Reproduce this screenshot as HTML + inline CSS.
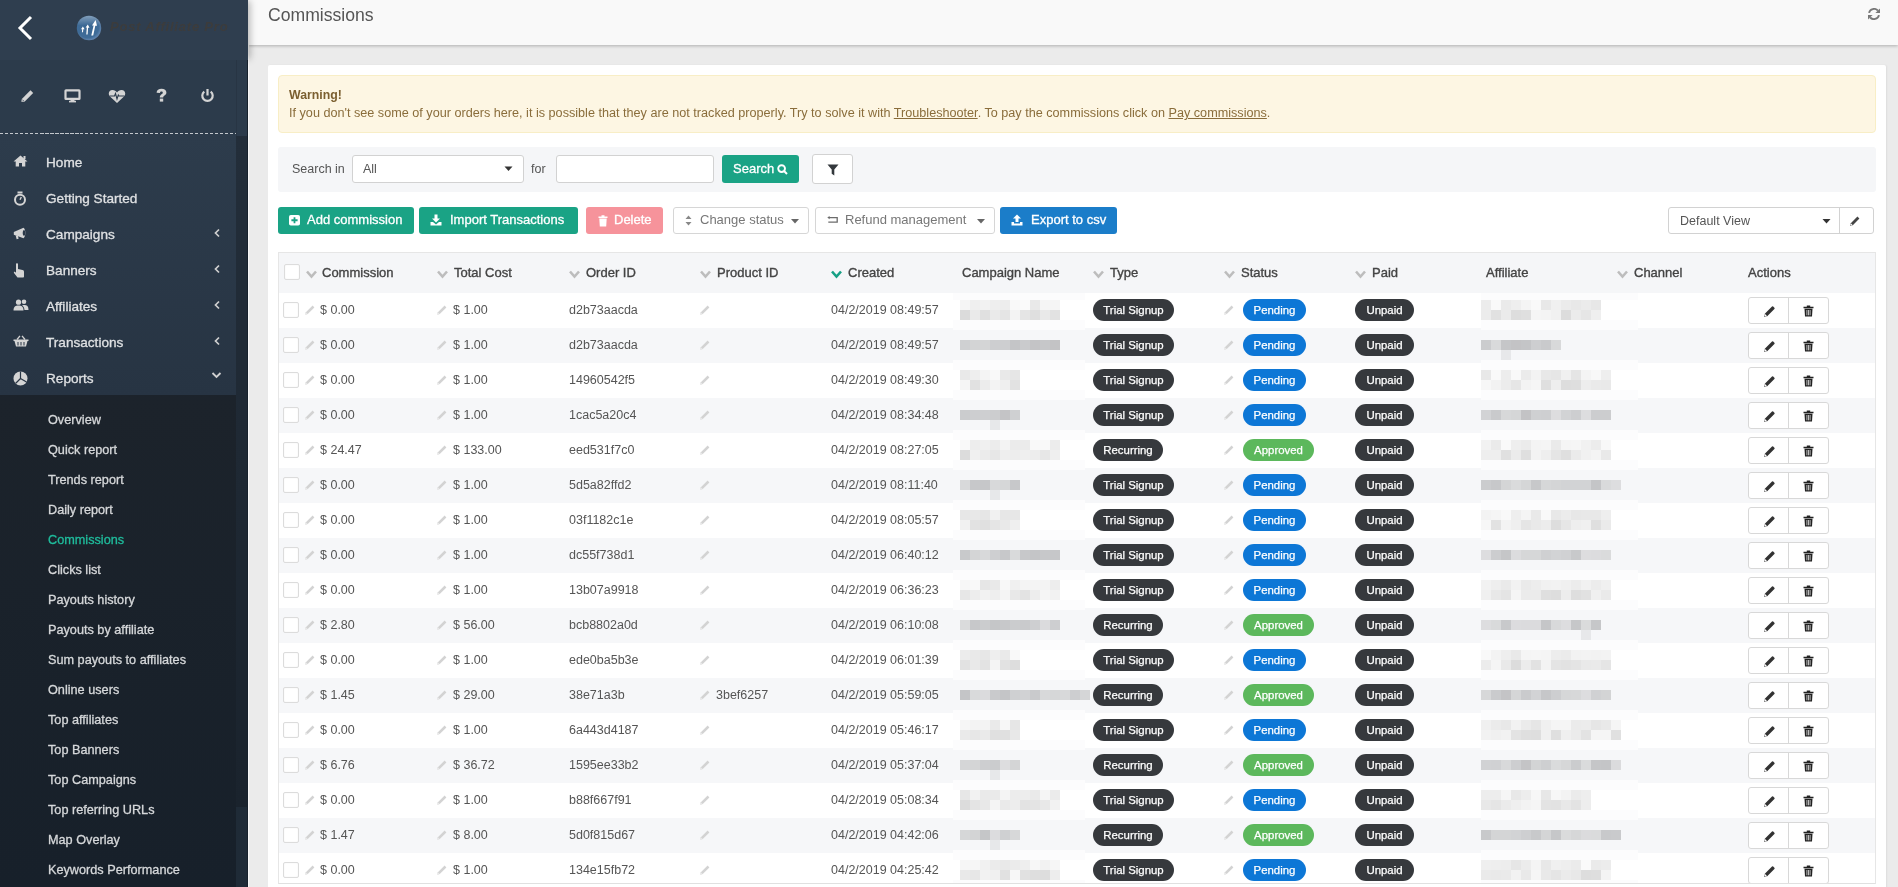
<!DOCTYPE html><html><head><meta charset="utf-8"><style>
*{margin:0;padding:0;box-sizing:border-box}
svg{display:block}
#wrap{position:absolute;left:0;top:0;width:1898px;height:887px;will-change:transform}
html,body{width:1898px;height:887px;overflow:hidden;background:#ebebeb;font-family:"Liberation Sans",sans-serif}
.a{position:absolute}
#sb{position:absolute;left:0;top:0;width:248px;height:887px;background:#1b222b;z-index:5}
#edge{position:absolute;left:247px;top:60px;width:1px;height:827px;background:#17212c}
#edge2{position:absolute;left:248px;top:45px;width:1px;height:842px;background:#f7f7f7}
#sbh{position:absolute;left:0;top:0;width:248px;height:60px;background:#2f3e4f;box-shadow:3px 0 7px -1px rgba(0,0,0,.28)}
#sbi{position:absolute;left:0;top:60px;width:236px;height:74px;background:#2c3b4b}
#sbm{position:absolute;left:0;top:134px;width:236px;height:261px;background:linear-gradient(#2d3c4c,#273443)}
#sbsub{position:absolute;left:0;top:395px;width:236px;height:492px;background:linear-gradient(#1c232b,#17202a)}
#track{position:absolute;left:236px;top:60px;width:12px;height:76px;background:#2c3b4b;border-left:1px solid #283544}
#track2{position:absolute;left:236px;top:136px;width:12px;height:671px;background:linear-gradient(#232e3a,#1a232d)}
#track3{display:none}
#thumb{position:absolute;left:236px;top:807px;width:12px;height:80px;background:#1f2b37}
.dash{position:absolute;left:0;top:133px;width:236px;height:1px;background:repeating-linear-gradient(90deg,#c3c8cd 0 3.5px,transparent 3.5px 5px)}
.mi{position:absolute;left:46px;color:#dfe1e3;font-size:13.6px;line-height:18px;white-space:nowrap;-webkit-text-stroke:.3px #dfe1e3}
.mic{position:absolute;left:13px}
.chev{position:absolute;left:212.5px}
.si{position:absolute;left:48px;color:#d6d8da;font-size:12.7px;line-height:16px;white-space:nowrap;-webkit-text-stroke:.3px currentColor}
#hdr{position:absolute;left:248px;top:0;width:1650px;height:45px;background:#f9f9f9;box-shadow:0 1px 3px rgba(0,0,0,.25)}
#title{position:absolute;left:20px;top:4px;font-size:17.6px;line-height:22px;color:#555}
#panel{position:absolute;left:268px;top:65px;width:1618px;height:830px;background:#fff;border-radius:2px;box-shadow:1px 0 2px rgba(0,0,0,.06)}
#warn{position:absolute;left:278px;top:75px;width:1598px;height:58px;background:#fdf6e3;border:1px solid #f8eec6;border-radius:4px;color:#8a6d3b}
#warn b{position:absolute;left:10px;top:12px;font-size:12.3px;line-height:15px;color:#7b5f30}
#warn .t{position:absolute;left:10px;top:30px;font-size:12.65px;line-height:15px;white-space:nowrap;color:#8a6d3b}
#warn u{text-decoration:underline}
#sbar{position:absolute;left:278px;top:147px;width:1598px;height:45px;background:#f5f6f8;border-radius:3px}
.lbl{position:absolute;font-size:12.5px;line-height:16px;color:#555}
.inp{position:absolute;background:#fff;border:1px solid #d2d2d2;border-radius:3px}
.btn{position:absolute;height:28px;border-radius:3px;color:#fff;font-size:13px;line-height:28px;white-space:nowrap;-webkit-text-stroke:.3px #fff}
.btn.w{-webkit-text-stroke:0}
.g{background:#1aa385}
.w{background:#fff;border:1px solid #d6d6d6;color:#777}
#tbl{position:absolute;left:278px;top:252px;width:1598px;height:632px;border:1px solid #e6e6e6;border-bottom:1px solid #e0e0e0;overflow:hidden}
#th{position:absolute;left:0;top:0;width:1596px;height:40px;background:#f5f6f8}
.hd{position:absolute;top:12px;font-size:13px;line-height:16px;color:#444;-webkit-text-stroke:.35px #444;white-space:nowrap}
.row{position:absolute;left:0;width:1596px;height:35px}
.row.odd{background:#f6f7f9}
.cb{position:absolute;width:16px;height:16px;border:1px solid #dcdcdc;border-radius:2px;background:#fff;box-shadow:inset 0 0 2px rgba(0,0,0,.05)}
.tx{position:absolute;top:9px;font-size:12.5px;line-height:16px;color:#555;white-space:nowrap}
.pen{position:absolute}
.badge{position:absolute;top:6px;height:22px;border-radius:11px;color:#fff;font-size:11.4px;line-height:22px;-webkit-text-stroke:.25px #fff;text-align:center;white-space:nowrap}
.dk{background:#36393d}
.bl{background:#0d77d6}
.gr{background:#5cb85c}
.blur{position:absolute}
.act{position:absolute;top:4px;width:81px;height:27px;border:1px solid #d8d8d8;border-radius:3px;background:#fff}
.act:after{content:"";position:absolute;left:39px;top:0;width:1px;height:25px;background:#d8d8d8}
</style></head><body><div id="wrap">
<div id="sb"><div id="sbh"></div><div id="sbi"></div><div id="sbm"></div><div id="sbsub"></div><div id="track"></div><div id="track2"></div><div id="track3"></div><div id="thumb"></div><div id="edge"></div><div class="dash"></div>
<svg class="a" style="left:16px;top:14px" width="20" height="30" viewBox="0 0 20 30"><path d="M15 3 L4 14 L15 25" stroke="#fff" stroke-width="3" fill="none"/></svg>
<svg class="a" style="left:76px;top:15px" width="26" height="26" viewBox="0 0 26 26"><defs><radialGradient id="lg" cx="45%" cy="45%" r="60%"><stop offset="0" stop-color="#3a6793"/><stop offset=".75" stop-color="#3f6c98"/><stop offset="1" stop-color="#6f8fb8"/></radialGradient><linearGradient id="lg2" x1="0" y1="0" x2="0" y2="1"><stop offset="0" stop-color="#fff" stop-opacity=".35"/><stop offset=".4" stop-color="#fff" stop-opacity="0"/></linearGradient></defs><circle cx="13" cy="13" r="12.2" fill="url(#lg)"/><circle cx="13" cy="13" r="12.2" fill="url(#lg2)"/><path d="M6.9 11.6 L5 14.2 H6.2 L5.9 17.3 H7 L7.3 14.3 H8.6 Z M11.8 9.4 L9.6 12.6 H10.8 L10.3 19.5 H11.6 L12.1 12.8 H13.5 Z M19.6 5 L16 10.4 H17.6 L15.3 20.6 H17.2 L19.3 10.7 H21 Z" fill="#fff"/></svg>
<div class="a" style="left:110px;top:18px;font-size:13px;line-height:18px;font-weight:bold;font-style:italic;color:#3c3c3c;letter-spacing:.8px;white-space:nowrap">Post Affiliate Pro</div>
<svg class="a" style="left:20px;top:88px" width="15" height="15" viewBox="0 0 15 15"><path d="M1.3 13.8 L1.8 11 L10.5 2.3 L13.2 5 L4.5 13.7 Z" fill="#d4d4d4"/><path d="M2.3 11.6 L3.9 13.2" stroke="#2c3b4b" stroke-width=".8"/></svg>
<svg class="a" style="left:64px;top:89px" width="17" height="14" viewBox="0 0 17 14"><rect x="1.5" y="1.3" width="14" height="8.6" rx=".5" fill="none" stroke="#d4d4d4" stroke-width="2.2"/><rect x="6.5" y="10.5" width="4" height="1.8" fill="#d4d4d4"/><rect x="5" y="11.8" width="7" height="1.6" fill="#d4d4d4"/></svg>
<svg class="a" style="left:108px;top:88.5px" width="18" height="15" viewBox="0 0 18 15"><path d="M9 14 L2 7.5 C-0.5 5 1 1 4.5 1 C6.5 1 8 2.2 9 3.5 C10 2.2 11.5 1 13.5 1 C17 1 18.5 5 16 7.5 Z" fill="#d4d4d4"/><path d="M1.5 7 H6.5 L7.5 4.5 L9 10 L10.3 6 L11 7 H16.5" stroke="#2c3b4b" stroke-width="1.1" fill="none"/></svg>
<svg class="a" style="left:155px;top:88px" width="13" height="15" viewBox="0 0 13 15"><path d="M1.6 4.8 C1.6 2.1 3.8 0.8 6.5 0.8 C9.4 0.8 11.4 2.4 11.4 4.6 C11.4 7.3 8.2 7.5 8.2 9.6 H4.8 C4.8 6.4 7.8 6.3 7.8 4.8 C7.8 4 7.3 3.6 6.5 3.6 C5.6 3.6 5 4.1 5 5 Z" fill="#d4d4d4"/><rect x="4.8" y="10.6" width="3.4" height="3" fill="#d4d4d4"/></svg>
<svg class="a" style="left:200px;top:88px" width="15" height="15" viewBox="0 0 15 15"><path d="M4.3 3.6 A5.2 5.2 0 1 0 10.7 3.6" stroke="#d4d4d4" stroke-width="2.2" fill="none"/><rect x="6.4" y="1" width="2.2" height="6.5" fill="#d4d4d4"/></svg>
<div class="mi" style="top:154px">Home</div>
<div class="mic" style="top:155px"><svg width="15" height="12" viewBox="0 0 15 12"><path d="M7.5 0.5 L14.5 6.5 H12.3 V11.5 H9 V8 H6 V11.5 H2.7 V6.5 H0.5 Z" fill="#d4d4d4"/><rect x="10.5" y="1" width="2" height="3" fill="#d4d4d4"/></svg></div>
<div class="mi" style="top:190px">Getting Started</div>
<div class="mic" style="top:191px"><svg width="14" height="15" viewBox="0 0 14 15"><circle cx="7" cy="8.8" r="5" stroke="#d4d4d4" stroke-width="2" fill="none"/><rect x="4.5" y="0.5" width="5" height="2" fill="#d4d4d4"/><path d="M7 8.8 L8.3 6" stroke="#d4d4d4" stroke-width="1.4"/></svg></div>
<div class="mi" style="top:226px">Campaigns</div>
<div class="mic" style="top:227px"><svg width="15" height="13" viewBox="0 0 15 13"><path d="M0.8 5 L10.5 0.8 C12.8 2.5 13 9.5 10.5 11.2 L0.8 7.8 Z" fill="#d4d4d4"/><ellipse cx="11" cy="6" rx="1.3" ry="3" fill="#2a3848"/><path d="M2.6 8.2 L5 9 L5.6 11.8 L3.6 12.2 Z" fill="#d4d4d4"/></svg></div>
<div class="mi" style="top:262px">Banners</div>
<div class="mic" style="top:263px"><svg width="12" height="15" viewBox="0 0 12 15"><path d="M3 1 C3 0 5 0 5 1 V6 L9.5 7 C11 7.3 11 8.5 11 9 V13.5 C11 14.3 10.5 14.5 10 14.5 H4.5 L1 10 C0.5 9 1.5 8.5 2.2 9 L3 9.8 Z" fill="#d4d4d4"/></svg></div>
<div class="mi" style="top:298px">Affiliates</div>
<div class="mic" style="top:299px"><svg width="16" height="12" viewBox="0 0 16 12"><circle cx="5.5" cy="3.2" r="2.6" fill="#d4d4d4"/><path d="M0.5 11.5 C0.5 7.5 2.5 6.5 5.5 6.5 C8.5 6.5 10.5 7.5 10.5 11.5 Z" fill="#d4d4d4"/><circle cx="11" cy="2.8" r="2.3" fill="#d4d4d4"/><path d="M11.5 11 H15.5 C15.5 7 14 6 11 6 C10 6 9.5 6.2 9.2 6.4 C10.5 7.3 11.3 8.8 11.5 11 Z" fill="#d4d4d4"/></svg></div>
<div class="mi" style="top:334px">Transactions</div>
<div class="mic" style="top:335px"><svg width="16" height="12" viewBox="0 0 16 12"><path d="M0.5 4.5 H15.5 V6 H0.5 Z M1.5 6 H14.5 L13 11.5 H3 Z" fill="#d4d4d4"/><path d="M4 4.5 L7 0.8 M12 4.5 L9 0.8" stroke="#d4d4d4" stroke-width="1.3"/><path d="M5 7 V10.5 M8 7 V10.5 M11 7 V10.5" stroke="#283544" stroke-width="1"/></svg></div>
<div class="mi" style="top:370px">Reports</div>
<div class="mic" style="top:371px"><svg width="15" height="15" viewBox="0 0 15 15"><circle cx="7.5" cy="7.5" r="7" fill="#d4d4d4"/><path d="M7.5 7.5 L7.5 0.5 M7.5 7.5 L13.5 11 M7.5 7.5 L2.5 12.5" stroke="#283544" stroke-width="1.2"/></svg></div>
<svg class="chev" style="top:228px" width="8" height="10" viewBox="0 0 8 10"><path d="M6 1.5 L2.5 5 L6 8.5" stroke="#d0d0d0" stroke-width="1.7" fill="none"/></svg>
<svg class="chev" style="top:264px" width="8" height="10" viewBox="0 0 8 10"><path d="M6 1.5 L2.5 5 L6 8.5" stroke="#d0d0d0" stroke-width="1.7" fill="none"/></svg>
<svg class="chev" style="top:300px" width="8" height="10" viewBox="0 0 8 10"><path d="M6 1.5 L2.5 5 L6 8.5" stroke="#d0d0d0" stroke-width="1.7" fill="none"/></svg>
<svg class="chev" style="top:336px" width="8" height="10" viewBox="0 0 8 10"><path d="M6 1.5 L2.5 5 L6 8.5" stroke="#d0d0d0" stroke-width="1.7" fill="none"/></svg>
<svg class="chev" style="top:371px;left:211px" width="11" height="8" viewBox="0 0 11 8"><path d="M1.5 2 L5.5 6 L9.5 2" stroke="#d0d0d0" stroke-width="1.8" fill="none"/></svg>
<div class="si" style="top:412px">Overview</div>
<div class="si" style="top:442px">Quick report</div>
<div class="si" style="top:472px">Trends report</div>
<div class="si" style="top:502px">Daily report</div>
<div class="si" style="top:532px;color:#1fbc9c">Commissions</div>
<div class="si" style="top:562px">Clicks list</div>
<div class="si" style="top:592px">Payouts history</div>
<div class="si" style="top:622px">Payouts by affiliate</div>
<div class="si" style="top:652px">Sum payouts to affiliates</div>
<div class="si" style="top:682px">Online users</div>
<div class="si" style="top:712px">Top affiliates</div>
<div class="si" style="top:742px">Top Banners</div>
<div class="si" style="top:772px">Top Campaigns</div>
<div class="si" style="top:802px">Top referring URLs</div>
<div class="si" style="top:832px">Map Overlay</div>
<div class="si" style="top:862px">Keywords Performance</div>
</div>
<div id="hdr"><div id="title">Commissions</div>
<svg class="a" style="left:1620px;top:8px" width="12" height="12" viewBox="0 0 12 12"><path d="M1.04 4.9 A5.1 5.1 0 0 1 9.9 2.7" stroke="#787878" stroke-width="1.9" fill="none"/><path d="M7.4 4.9 H12 V0.4 Z" fill="#787878"/><path d="M10.96 7.1 A5.1 5.1 0 0 1 2.1 9.3" stroke="#787878" stroke-width="1.9" fill="none"/><path d="M4.6 7.1 H0 V11.6 Z" fill="#787878"/></svg>
</div>
<div id="panel"></div><div id="edge2"></div>
<div id="warn"><b>Warning!</b><div class="t">If you don't see some of your orders here, it is possible that they are not tracked properly. Try to solve it with <u>Troubleshooter</u>. To pay the commissions click on <u>Pay commissions</u>.</div></div>
<div id="sbar"></div>
<div class="lbl" style="left:292px;top:161px">Search in</div>
<div class="inp" style="left:352px;top:155px;width:172px;height:28px"><div class="lbl" style="left:10px;top:5px;color:#555">All</div><svg class="a" style="left:151px;top:10px" width="9" height="6" viewBox="0 0 9 6"><path d="M0.5 0.5 H8.5 L4.5 5 Z" fill="#333"/></svg></div>
<div class="lbl" style="left:531px;top:161px">for</div>
<div class="inp" style="left:556px;top:155px;width:158px;height:28px"></div>
<div class="btn g" style="left:722px;top:155px;width:77px;height:28px;padding-left:11px">Search <svg style="position:absolute;left:55px;top:9px" width="11" height="11" viewBox="0 0 11 11"><circle cx="4.6" cy="4.6" r="3.4" stroke="#fff" stroke-width="1.9" fill="none"/><path d="M7 7 L10 10" stroke="#fff" stroke-width="2"/></svg></div>
<div class="inp" style="left:812px;top:154px;width:41px;height:30px"><svg class="a" style="left:14px;top:9px" width="12" height="12" viewBox="0 0 12 12"><path d="M0.5 0.5 H11.5 L7.3 5.5 V11.5 L4.7 9.8 V5.5 Z" fill="#33383c"/></svg></div>
<div class="btn g" style="left:278px;top:207px;height:27px;line-height:26px;width:136px;padding-left:29px">Add commission<svg style="position:absolute;left:11px;top:8px" width="11" height="11" viewBox="0 0 11 11"><rect x="0" y="0" width="11" height="10.5" rx="1.8" fill="#fff"/><path d="M5.5 2.2 V8.3 M2.4 5.25 H8.6" stroke="#1aa385" stroke-width="1.8"/></svg></div>
<div class="btn g" style="left:419px;top:207px;height:27px;line-height:26px;width:159px;padding-left:31px">Import Transactions<svg style="position:absolute;left:11px;top:7px" width="12" height="12" viewBox="0 0 12 12"><path d="M4.5 0.5 H7.5 V4.5 H10 L6 8.5 L2 4.5 H4.5 Z" fill="#fff"/><path d="M0.5 8 H3 L6 10.5 L9 8 H11.5 V11.5 H0.5 Z" fill="#fff"/></svg></div>
<div class="btn" style="left:586px;top:207px;height:27px;line-height:26px;width:77px;background:#f6939b;padding-left:28px">Delete<svg style="position:absolute;left:12px;top:8px" width="10" height="12" viewBox="0 0 10 12"><path d="M0.5 1.5 H9.5 V3 H0.5 Z M3.5 0.3 H6.5 V1.5 H3.5 Z M1.3 3.5 H8.7 L8.2 11.5 H1.8 Z" fill="#fff"/></svg></div>
<div class="btn w" style="left:673px;top:207px;height:27px;width:136px;padding-left:26px;line-height:24px">Change status<svg style="position:absolute;left:11px;top:7px" width="7" height="11" viewBox="0 0 7 11"><path d="M3.5 0.5 L6.5 4 H0.5 Z M3.5 10.5 L6.5 7 H0.5 Z" fill="#888"/></svg><svg style="position:absolute;left:117px;top:11px" width="8" height="5" viewBox="0 0 8 5"><path d="M0 0 H8 L4 4.5 Z" fill="#666"/></svg></div>
<div class="btn w" style="left:815px;top:207px;height:27px;width:180px;padding-left:29px;line-height:24px">Refund management<svg style="position:absolute;left:11px;top:8px" width="12" height="8" viewBox="0 0 12 8"><path d="M2 1.6 H10.2 V6.1 H1.3" stroke="#6c6c6c" stroke-width="1.3" fill="none"/><path d="M0.3 1.6 L2.6 0 V3.2 Z" fill="#6c6c6c"/></svg><svg style="position:absolute;left:161px;top:11px" width="8" height="5" viewBox="0 0 8 5"><path d="M0 0 H8 L4 4.5 Z" fill="#666"/></svg></div>
<div class="btn" style="left:1000px;top:207px;height:27px;line-height:26px;width:117px;background:#1b7dc9;padding-left:31px">Export to csv<svg style="position:absolute;left:11px;top:7px" width="12" height="12" viewBox="0 0 12 12"><path d="M6 0.5 L10 4.5 H7.5 V8 H4.5 V4.5 H2 Z" fill="#fff"/><path d="M0.5 8 H3 V9.5 H9 V8 H11.5 V11.5 H0.5 Z" fill="#fff"/></svg></div>
<div class="inp" style="left:1668px;top:207px;width:206px;height:27px;border-color:#d2d2d2"><div class="lbl" style="left:11px;top:4.5px;color:#555">Default View</div><svg class="a" style="left:153px;top:11px" width="9" height="5" viewBox="0 0 9 5"><path d="M0.5 0 H8.5 L4.5 4.5 Z" fill="#333"/></svg><div class="a" style="left:170px;top:0;width:1px;height:25px;background:#d2d2d2"></div><svg class="a" style="left:181px;top:7.5px" width="10" height="10" viewBox="0 0 10 10"><path d="M0.3 9.7 L0.8 7.2 L7.4 0.6 L9.4 2.6 L2.8 9.2 Z" fill="#444"/><path d="M0.3 9.7 L0.8 7.2 L2.8 9.2 Z" fill="#fff"/><path d="M0.3 9.7 L0.5 8.7 L1.3 9.5 Z" fill="#444"/></svg></div>
<div id="tbl"><div id="th">
<div class="cb" style="left:5px;top:11px"></div>
<svg class="a" style="left:27px;top:17px" width="11" height="9" viewBox="0 0 11 9"><path d="M1 1.5 L5.5 6.5 L10 1.5" stroke="#bdbdbd" stroke-width="2.6" fill="none"/></svg>
<div class="hd" style="left:43px">Commission</div>
<svg class="a" style="left:158px;top:17px" width="11" height="9" viewBox="0 0 11 9"><path d="M1 1.5 L5.5 6.5 L10 1.5" stroke="#bdbdbd" stroke-width="2.6" fill="none"/></svg>
<div class="hd" style="left:175px">Total Cost</div>
<svg class="a" style="left:290px;top:17px" width="11" height="9" viewBox="0 0 11 9"><path d="M1 1.5 L5.5 6.5 L10 1.5" stroke="#bdbdbd" stroke-width="2.6" fill="none"/></svg>
<div class="hd" style="left:307px">Order ID</div>
<svg class="a" style="left:421px;top:17px" width="11" height="9" viewBox="0 0 11 9"><path d="M1 1.5 L5.5 6.5 L10 1.5" stroke="#bdbdbd" stroke-width="2.6" fill="none"/></svg>
<div class="hd" style="left:438px">Product ID</div>
<svg class="a" style="left:552px;top:17px" width="11" height="9" viewBox="0 0 11 9"><path d="M1 1.5 L5.5 6.5 L10 1.5" stroke="#16a085" stroke-width="2.6" fill="none"/></svg>
<div class="hd" style="left:569px">Created</div>
<div class="hd" style="left:683px">Campaign Name</div>
<svg class="a" style="left:814px;top:17px" width="11" height="9" viewBox="0 0 11 9"><path d="M1 1.5 L5.5 6.5 L10 1.5" stroke="#bdbdbd" stroke-width="2.6" fill="none"/></svg>
<div class="hd" style="left:831px">Type</div>
<svg class="a" style="left:945px;top:17px" width="11" height="9" viewBox="0 0 11 9"><path d="M1 1.5 L5.5 6.5 L10 1.5" stroke="#bdbdbd" stroke-width="2.6" fill="none"/></svg>
<div class="hd" style="left:962px">Status</div>
<svg class="a" style="left:1076px;top:17px" width="11" height="9" viewBox="0 0 11 9"><path d="M1 1.5 L5.5 6.5 L10 1.5" stroke="#bdbdbd" stroke-width="2.6" fill="none"/></svg>
<div class="hd" style="left:1093px">Paid</div>
<div class="hd" style="left:1207px">Affiliate</div>
<svg class="a" style="left:1338px;top:17px" width="11" height="9" viewBox="0 0 11 9"><path d="M1 1.5 L5.5 6.5 L10 1.5" stroke="#bdbdbd" stroke-width="2.6" fill="none"/></svg>
<div class="hd" style="left:1355px">Channel</div>
<div class="hd" style="left:1469px">Actions</div>
</div>
<div class="row" style="top:40px">
<div class="cb" style="left:4px;top:9px"></div>
<div class="pen" style="left:26px;top:12px"><svg width="10" height="10" viewBox="0 0 10 10"><path d="M0.3 9.7 L0.9 7.3 L7.6 0.6 L9.4 2.4 L2.7 9.1 Z" fill="#d3d3d3"/><path d="M0.3 9.7 L0.9 7.3 L2.7 9.1 Z" fill="#e9e9e9"/></svg></div>
<div class="tx" style="left:41px">$ 0.00</div>
<div class="pen" style="left:158px;top:12px"><svg width="10" height="10" viewBox="0 0 10 10"><path d="M0.3 9.7 L0.9 7.3 L7.6 0.6 L9.4 2.4 L2.7 9.1 Z" fill="#d3d3d3"/><path d="M0.3 9.7 L0.9 7.3 L2.7 9.1 Z" fill="#e9e9e9"/></svg></div>
<div class="tx" style="left:174px">$ 1.00</div>
<div class="tx" style="left:290px">d2b73aacda</div>
<div class="pen" style="left:421px;top:12px"><svg width="10" height="10" viewBox="0 0 10 10"><path d="M0.3 9.7 L0.9 7.3 L7.6 0.6 L9.4 2.4 L2.7 9.1 Z" fill="#d3d3d3"/><path d="M0.3 9.7 L0.9 7.3 L2.7 9.1 Z" fill="#e9e9e9"/></svg></div>
<div class="tx" style="left:552px">04/2/2019 08:49:57</div>
<div class="a" style="left:674px;top:0;width:132px;height:7px;background:#fcfcfd"></div><div class="a" style="left:674px;top:27px;width:132px;height:8px;background:#fcfcfd"></div>
<div class="a" style="left:1202px;top:0;width:157px;height:7px;background:#fcfcfd"></div><div class="a" style="left:1202px;top:27px;width:157px;height:8px;background:#fcfcfd"></div>
<svg class="blur" style="left:681px;top:7px" width="100" height="20"><rect x="0" y="0" width="10" height="10" fill="#000" fill-opacity="0.039"/><rect x="10" y="0" width="10" height="10" fill="#000" fill-opacity="0.064"/><rect x="20" y="0" width="10" height="10" fill="#000" fill-opacity="0.050"/><rect x="30" y="0" width="10" height="10" fill="#000" fill-opacity="0.068"/><rect x="40" y="0" width="10" height="10" fill="#000" fill-opacity="0.070"/><rect x="50" y="0" width="10" height="10" fill="#000" fill-opacity="0.025"/><rect x="60" y="0" width="10" height="10" fill="#000" fill-opacity="0.021"/><rect x="70" y="0" width="10" height="10" fill="#000" fill-opacity="0.087"/><rect x="80" y="0" width="10" height="10" fill="#000" fill-opacity="0.041"/><rect x="90" y="0" width="10" height="10" fill="#000" fill-opacity="0.039"/><rect x="0" y="10" width="10" height="10" fill="#000" fill-opacity="0.140"/><rect x="10" y="10" width="10" height="10" fill="#000" fill-opacity="0.082"/><rect x="20" y="10" width="10" height="10" fill="#000" fill-opacity="0.122"/><rect x="30" y="10" width="10" height="10" fill="#000" fill-opacity="0.082"/><rect x="40" y="10" width="10" height="10" fill="#000" fill-opacity="0.100"/><rect x="50" y="10" width="10" height="10" fill="#000" fill-opacity="0.047"/><rect x="60" y="10" width="10" height="10" fill="#000" fill-opacity="0.100"/><rect x="70" y="10" width="10" height="10" fill="#000" fill-opacity="0.125"/><rect x="80" y="10" width="10" height="10" fill="#000" fill-opacity="0.088"/><rect x="90" y="10" width="10" height="10" fill="#000" fill-opacity="0.112"/></svg>
<div class="badge dk" style="left:814px;width:81px">Trial Signup</div>
<div class="pen" style="left:945px;top:12px"><svg width="10" height="10" viewBox="0 0 10 10"><path d="M0.3 9.7 L0.9 7.3 L7.6 0.6 L9.4 2.4 L2.7 9.1 Z" fill="#d3d3d3"/><path d="M0.3 9.7 L0.9 7.3 L2.7 9.1 Z" fill="#e9e9e9"/></svg></div>
<div class="badge bl" style="left:964px;width:63px">Pending</div>
<div class="badge dk" style="left:1076px;width:59px">Unpaid</div>
<svg class="blur" style="left:1202px;top:7px" width="120" height="20"><rect x="0" y="0" width="10" height="10" fill="#000" fill-opacity="0.074"/><rect x="10" y="0" width="10" height="10" fill="#000" fill-opacity="0.025"/><rect x="20" y="0" width="10" height="10" fill="#000" fill-opacity="0.081"/><rect x="30" y="0" width="10" height="10" fill="#000" fill-opacity="0.067"/><rect x="40" y="0" width="10" height="10" fill="#000" fill-opacity="0.044"/><rect x="50" y="0" width="10" height="10" fill="#000" fill-opacity="0.022"/><rect x="60" y="0" width="10" height="10" fill="#000" fill-opacity="0.089"/><rect x="70" y="0" width="10" height="10" fill="#000" fill-opacity="0.058"/><rect x="80" y="0" width="10" height="10" fill="#000" fill-opacity="0.078"/><rect x="90" y="0" width="10" height="10" fill="#000" fill-opacity="0.090"/><rect x="100" y="0" width="10" height="10" fill="#000" fill-opacity="0.077"/><rect x="110" y="0" width="10" height="10" fill="#000" fill-opacity="0.094"/><rect x="0" y="10" width="10" height="10" fill="#000" fill-opacity="0.073"/><rect x="10" y="10" width="10" height="10" fill="#000" fill-opacity="0.118"/><rect x="20" y="10" width="10" height="10" fill="#000" fill-opacity="0.079"/><rect x="30" y="10" width="10" height="10" fill="#000" fill-opacity="0.133"/><rect x="40" y="10" width="10" height="10" fill="#000" fill-opacity="0.127"/><rect x="50" y="10" width="10" height="10" fill="#000" fill-opacity="0.041"/><rect x="60" y="10" width="10" height="10" fill="#000" fill-opacity="0.045"/><rect x="70" y="10" width="10" height="10" fill="#000" fill-opacity="0.054"/><rect x="80" y="10" width="10" height="10" fill="#000" fill-opacity="0.136"/><rect x="90" y="10" width="10" height="10" fill="#000" fill-opacity="0.078"/><rect x="100" y="10" width="10" height="10" fill="#000" fill-opacity="0.099"/><rect x="110" y="10" width="10" height="10" fill="#000" fill-opacity="0.063"/></svg>
<div class="act" style="left:1469px"><svg class="a" style="left:14.5px;top:7.5px" width="11" height="11" viewBox="0 0 11 11"><path d="M0.3 10.7 L0.8 7.8 L8 0.6 Q8.6 0 9.2 0.6 L10.4 1.8 Q11 2.4 10.4 3 L3.2 10.2 Z" fill="#333"/><path d="M0.3 10.7 L0.8 7.8 L3.2 10.2 Z" fill="#fff"/><path d="M0.3 10.7 L0.5 9.5 L1.5 10.5 Z" fill="#333"/></svg><svg class="a" style="left:54px;top:7px" width="11" height="12" viewBox="0 0 11 12"><path d="M0.5 1.8 H10.5 V3.2 H0.5 Z M3.8 0.4 H7.2 V1.8 H3.8 Z M1.5 3.8 H9.5 L9 11.5 H2 Z" fill="#222"/><path d="M3.9 5 V10.3 M5.5 5 V10.3 M7.1 5 V10.3" stroke="#fff" stroke-width=".7"/></svg></div>
</div>
<div class="row odd" style="top:75px">
<div class="cb" style="left:4px;top:9px"></div>
<div class="pen" style="left:26px;top:12px"><svg width="10" height="10" viewBox="0 0 10 10"><path d="M0.3 9.7 L0.9 7.3 L7.6 0.6 L9.4 2.4 L2.7 9.1 Z" fill="#d3d3d3"/><path d="M0.3 9.7 L0.9 7.3 L2.7 9.1 Z" fill="#e9e9e9"/></svg></div>
<div class="tx" style="left:41px">$ 0.00</div>
<div class="pen" style="left:158px;top:12px"><svg width="10" height="10" viewBox="0 0 10 10"><path d="M0.3 9.7 L0.9 7.3 L7.6 0.6 L9.4 2.4 L2.7 9.1 Z" fill="#d3d3d3"/><path d="M0.3 9.7 L0.9 7.3 L2.7 9.1 Z" fill="#e9e9e9"/></svg></div>
<div class="tx" style="left:174px">$ 1.00</div>
<div class="tx" style="left:290px">d2b73aacda</div>
<div class="pen" style="left:421px;top:12px"><svg width="10" height="10" viewBox="0 0 10 10"><path d="M0.3 9.7 L0.9 7.3 L7.6 0.6 L9.4 2.4 L2.7 9.1 Z" fill="#d3d3d3"/><path d="M0.3 9.7 L0.9 7.3 L2.7 9.1 Z" fill="#e9e9e9"/></svg></div>
<div class="tx" style="left:552px">04/2/2019 08:49:57</div>
<div class="a" style="left:674px;top:0;width:132px;height:2px;background:#fcfcfd"></div><div class="a" style="left:674px;top:32px;width:132px;height:3px;background:#fcfcfd"></div>
<div class="a" style="left:1202px;top:0;width:157px;height:2px;background:#fcfcfd"></div><div class="a" style="left:1202px;top:32px;width:157px;height:3px;background:#fcfcfd"></div>
<svg class="blur" style="left:681px;top:12px" width="100" height="20"><rect x="0" y="0" width="10" height="10" fill="#000" fill-opacity="0.156"/><rect x="10" y="0" width="10" height="10" fill="#000" fill-opacity="0.142"/><rect x="20" y="0" width="10" height="10" fill="#000" fill-opacity="0.139"/><rect x="30" y="0" width="10" height="10" fill="#000" fill-opacity="0.164"/><rect x="40" y="0" width="10" height="10" fill="#000" fill-opacity="0.164"/><rect x="50" y="0" width="10" height="10" fill="#000" fill-opacity="0.199"/><rect x="60" y="0" width="10" height="10" fill="#000" fill-opacity="0.175"/><rect x="70" y="0" width="10" height="10" fill="#000" fill-opacity="0.202"/><rect x="80" y="0" width="10" height="10" fill="#000" fill-opacity="0.194"/><rect x="90" y="0" width="10" height="10" fill="#000" fill-opacity="0.209"/></svg>
<div class="badge dk" style="left:814px;width:81px">Trial Signup</div>
<div class="pen" style="left:945px;top:12px"><svg width="10" height="10" viewBox="0 0 10 10"><path d="M0.3 9.7 L0.9 7.3 L7.6 0.6 L9.4 2.4 L2.7 9.1 Z" fill="#d3d3d3"/><path d="M0.3 9.7 L0.9 7.3 L2.7 9.1 Z" fill="#e9e9e9"/></svg></div>
<div class="badge bl" style="left:964px;width:63px">Pending</div>
<div class="badge dk" style="left:1076px;width:59px">Unpaid</div>
<svg class="blur" style="left:1202px;top:12px" width="80" height="20"><rect x="0" y="0" width="10" height="10" fill="#000" fill-opacity="0.174"/><rect x="10" y="0" width="10" height="10" fill="#000" fill-opacity="0.118"/><rect x="20" y="0" width="10" height="10" fill="#000" fill-opacity="0.195"/><rect x="30" y="0" width="10" height="10" fill="#000" fill-opacity="0.206"/><rect x="40" y="0" width="10" height="10" fill="#000" fill-opacity="0.200"/><rect x="50" y="0" width="10" height="10" fill="#000" fill-opacity="0.163"/><rect x="60" y="0" width="10" height="10" fill="#000" fill-opacity="0.179"/><rect x="70" y="0" width="10" height="10" fill="#000" fill-opacity="0.123"/><rect x="20" y="10" width="10" height="10" fill="#000" fill-opacity="0.06"/></svg>
<div class="act" style="left:1469px"><svg class="a" style="left:14.5px;top:7.5px" width="11" height="11" viewBox="0 0 11 11"><path d="M0.3 10.7 L0.8 7.8 L8 0.6 Q8.6 0 9.2 0.6 L10.4 1.8 Q11 2.4 10.4 3 L3.2 10.2 Z" fill="#333"/><path d="M0.3 10.7 L0.8 7.8 L3.2 10.2 Z" fill="#fff"/><path d="M0.3 10.7 L0.5 9.5 L1.5 10.5 Z" fill="#333"/></svg><svg class="a" style="left:54px;top:7px" width="11" height="12" viewBox="0 0 11 12"><path d="M0.5 1.8 H10.5 V3.2 H0.5 Z M3.8 0.4 H7.2 V1.8 H3.8 Z M1.5 3.8 H9.5 L9 11.5 H2 Z" fill="#222"/><path d="M3.9 5 V10.3 M5.5 5 V10.3 M7.1 5 V10.3" stroke="#fff" stroke-width=".7"/></svg></div>
</div>
<div class="row" style="top:110px">
<div class="cb" style="left:4px;top:9px"></div>
<div class="pen" style="left:26px;top:12px"><svg width="10" height="10" viewBox="0 0 10 10"><path d="M0.3 9.7 L0.9 7.3 L7.6 0.6 L9.4 2.4 L2.7 9.1 Z" fill="#d3d3d3"/><path d="M0.3 9.7 L0.9 7.3 L2.7 9.1 Z" fill="#e9e9e9"/></svg></div>
<div class="tx" style="left:41px">$ 0.00</div>
<div class="pen" style="left:158px;top:12px"><svg width="10" height="10" viewBox="0 0 10 10"><path d="M0.3 9.7 L0.9 7.3 L7.6 0.6 L9.4 2.4 L2.7 9.1 Z" fill="#d3d3d3"/><path d="M0.3 9.7 L0.9 7.3 L2.7 9.1 Z" fill="#e9e9e9"/></svg></div>
<div class="tx" style="left:174px">$ 1.00</div>
<div class="tx" style="left:290px">14960542f5</div>
<div class="pen" style="left:421px;top:12px"><svg width="10" height="10" viewBox="0 0 10 10"><path d="M0.3 9.7 L0.9 7.3 L7.6 0.6 L9.4 2.4 L2.7 9.1 Z" fill="#d3d3d3"/><path d="M0.3 9.7 L0.9 7.3 L2.7 9.1 Z" fill="#e9e9e9"/></svg></div>
<div class="tx" style="left:552px">04/2/2019 08:49:30</div>
<div class="a" style="left:674px;top:0;width:132px;height:7px;background:#fcfcfd"></div><div class="a" style="left:674px;top:27px;width:132px;height:8px;background:#fcfcfd"></div>
<div class="a" style="left:1202px;top:0;width:157px;height:7px;background:#fcfcfd"></div><div class="a" style="left:1202px;top:27px;width:157px;height:8px;background:#fcfcfd"></div>
<svg class="blur" style="left:681px;top:7px" width="60" height="20"><rect x="0" y="0" width="10" height="10" fill="#000" fill-opacity="0.087"/><rect x="10" y="0" width="10" height="10" fill="#000" fill-opacity="0.066"/><rect x="20" y="0" width="10" height="10" fill="#000" fill-opacity="0.043"/><rect x="30" y="0" width="10" height="10" fill="#000" fill-opacity="0.025"/><rect x="40" y="0" width="10" height="10" fill="#000" fill-opacity="0.088"/><rect x="50" y="0" width="10" height="10" fill="#000" fill-opacity="0.099"/><rect x="0" y="10" width="10" height="10" fill="#000" fill-opacity="0.040"/><rect x="10" y="10" width="10" height="10" fill="#000" fill-opacity="0.118"/><rect x="20" y="10" width="10" height="10" fill="#000" fill-opacity="0.075"/><rect x="30" y="10" width="10" height="10" fill="#000" fill-opacity="0.047"/><rect x="40" y="10" width="10" height="10" fill="#000" fill-opacity="0.062"/><rect x="50" y="10" width="10" height="10" fill="#000" fill-opacity="0.115"/></svg>
<div class="badge dk" style="left:814px;width:81px">Trial Signup</div>
<div class="pen" style="left:945px;top:12px"><svg width="10" height="10" viewBox="0 0 10 10"><path d="M0.3 9.7 L0.9 7.3 L7.6 0.6 L9.4 2.4 L2.7 9.1 Z" fill="#d3d3d3"/><path d="M0.3 9.7 L0.9 7.3 L2.7 9.1 Z" fill="#e9e9e9"/></svg></div>
<div class="badge bl" style="left:964px;width:63px">Pending</div>
<div class="badge dk" style="left:1076px;width:59px">Unpaid</div>
<svg class="blur" style="left:1202px;top:7px" width="130" height="20"><rect x="0" y="0" width="10" height="10" fill="#000" fill-opacity="0.090"/><rect x="10" y="0" width="10" height="10" fill="#000" fill-opacity="0.024"/><rect x="20" y="0" width="10" height="10" fill="#000" fill-opacity="0.069"/><rect x="30" y="0" width="10" height="10" fill="#000" fill-opacity="0.024"/><rect x="40" y="0" width="10" height="10" fill="#000" fill-opacity="0.077"/><rect x="50" y="0" width="10" height="10" fill="#000" fill-opacity="0.046"/><rect x="60" y="0" width="10" height="10" fill="#000" fill-opacity="0.090"/><rect x="70" y="0" width="10" height="10" fill="#000" fill-opacity="0.098"/><rect x="80" y="0" width="10" height="10" fill="#000" fill-opacity="0.060"/><rect x="90" y="0" width="10" height="10" fill="#000" fill-opacity="0.100"/><rect x="100" y="0" width="10" height="10" fill="#000" fill-opacity="0.045"/><rect x="110" y="0" width="10" height="10" fill="#000" fill-opacity="0.026"/><rect x="120" y="0" width="10" height="10" fill="#000" fill-opacity="0.068"/><rect x="0" y="10" width="10" height="10" fill="#000" fill-opacity="0.033"/><rect x="10" y="10" width="10" height="10" fill="#000" fill-opacity="0.052"/><rect x="20" y="10" width="10" height="10" fill="#000" fill-opacity="0.075"/><rect x="30" y="10" width="10" height="10" fill="#000" fill-opacity="0.097"/><rect x="40" y="10" width="10" height="10" fill="#000" fill-opacity="0.047"/><rect x="50" y="10" width="10" height="10" fill="#000" fill-opacity="0.035"/><rect x="60" y="10" width="10" height="10" fill="#000" fill-opacity="0.125"/><rect x="70" y="10" width="10" height="10" fill="#000" fill-opacity="0.065"/><rect x="80" y="10" width="10" height="10" fill="#000" fill-opacity="0.135"/><rect x="90" y="10" width="10" height="10" fill="#000" fill-opacity="0.129"/><rect x="100" y="10" width="10" height="10" fill="#000" fill-opacity="0.072"/><rect x="110" y="10" width="10" height="10" fill="#000" fill-opacity="0.081"/><rect x="120" y="10" width="10" height="10" fill="#000" fill-opacity="0.087"/></svg>
<div class="act" style="left:1469px"><svg class="a" style="left:14.5px;top:7.5px" width="11" height="11" viewBox="0 0 11 11"><path d="M0.3 10.7 L0.8 7.8 L8 0.6 Q8.6 0 9.2 0.6 L10.4 1.8 Q11 2.4 10.4 3 L3.2 10.2 Z" fill="#333"/><path d="M0.3 10.7 L0.8 7.8 L3.2 10.2 Z" fill="#fff"/><path d="M0.3 10.7 L0.5 9.5 L1.5 10.5 Z" fill="#333"/></svg><svg class="a" style="left:54px;top:7px" width="11" height="12" viewBox="0 0 11 12"><path d="M0.5 1.8 H10.5 V3.2 H0.5 Z M3.8 0.4 H7.2 V1.8 H3.8 Z M1.5 3.8 H9.5 L9 11.5 H2 Z" fill="#222"/><path d="M3.9 5 V10.3 M5.5 5 V10.3 M7.1 5 V10.3" stroke="#fff" stroke-width=".7"/></svg></div>
</div>
<div class="row odd" style="top:145px">
<div class="cb" style="left:4px;top:9px"></div>
<div class="pen" style="left:26px;top:12px"><svg width="10" height="10" viewBox="0 0 10 10"><path d="M0.3 9.7 L0.9 7.3 L7.6 0.6 L9.4 2.4 L2.7 9.1 Z" fill="#d3d3d3"/><path d="M0.3 9.7 L0.9 7.3 L2.7 9.1 Z" fill="#e9e9e9"/></svg></div>
<div class="tx" style="left:41px">$ 0.00</div>
<div class="pen" style="left:158px;top:12px"><svg width="10" height="10" viewBox="0 0 10 10"><path d="M0.3 9.7 L0.9 7.3 L7.6 0.6 L9.4 2.4 L2.7 9.1 Z" fill="#d3d3d3"/><path d="M0.3 9.7 L0.9 7.3 L2.7 9.1 Z" fill="#e9e9e9"/></svg></div>
<div class="tx" style="left:174px">$ 1.00</div>
<div class="tx" style="left:290px">1cac5a20c4</div>
<div class="pen" style="left:421px;top:12px"><svg width="10" height="10" viewBox="0 0 10 10"><path d="M0.3 9.7 L0.9 7.3 L7.6 0.6 L9.4 2.4 L2.7 9.1 Z" fill="#d3d3d3"/><path d="M0.3 9.7 L0.9 7.3 L2.7 9.1 Z" fill="#e9e9e9"/></svg></div>
<div class="tx" style="left:552px">04/2/2019 08:34:48</div>
<div class="a" style="left:674px;top:0;width:132px;height:2px;background:#fcfcfd"></div><div class="a" style="left:674px;top:32px;width:132px;height:3px;background:#fcfcfd"></div>
<div class="a" style="left:1202px;top:0;width:157px;height:2px;background:#fcfcfd"></div><div class="a" style="left:1202px;top:32px;width:157px;height:3px;background:#fcfcfd"></div>
<svg class="blur" style="left:681px;top:12px" width="60" height="20"><rect x="0" y="0" width="10" height="10" fill="#000" fill-opacity="0.171"/><rect x="10" y="0" width="10" height="10" fill="#000" fill-opacity="0.166"/><rect x="20" y="0" width="10" height="10" fill="#000" fill-opacity="0.162"/><rect x="30" y="0" width="10" height="10" fill="#000" fill-opacity="0.168"/><rect x="40" y="0" width="10" height="10" fill="#000" fill-opacity="0.203"/><rect x="50" y="0" width="10" height="10" fill="#000" fill-opacity="0.156"/><rect x="30" y="10" width="10" height="10" fill="#000" fill-opacity="0.06"/></svg>
<div class="badge dk" style="left:814px;width:81px">Trial Signup</div>
<div class="pen" style="left:945px;top:12px"><svg width="10" height="10" viewBox="0 0 10 10"><path d="M0.3 9.7 L0.9 7.3 L7.6 0.6 L9.4 2.4 L2.7 9.1 Z" fill="#d3d3d3"/><path d="M0.3 9.7 L0.9 7.3 L2.7 9.1 Z" fill="#e9e9e9"/></svg></div>
<div class="badge bl" style="left:964px;width:63px">Pending</div>
<div class="badge dk" style="left:1076px;width:59px">Unpaid</div>
<svg class="blur" style="left:1202px;top:12px" width="130" height="20"><rect x="0" y="0" width="10" height="10" fill="#000" fill-opacity="0.147"/><rect x="10" y="0" width="10" height="10" fill="#000" fill-opacity="0.179"/><rect x="20" y="0" width="10" height="10" fill="#000" fill-opacity="0.126"/><rect x="30" y="0" width="10" height="10" fill="#000" fill-opacity="0.133"/><rect x="40" y="0" width="10" height="10" fill="#000" fill-opacity="0.208"/><rect x="50" y="0" width="10" height="10" fill="#000" fill-opacity="0.157"/><rect x="60" y="0" width="10" height="10" fill="#000" fill-opacity="0.160"/><rect x="70" y="0" width="10" height="10" fill="#000" fill-opacity="0.101"/><rect x="80" y="0" width="10" height="10" fill="#000" fill-opacity="0.146"/><rect x="90" y="0" width="10" height="10" fill="#000" fill-opacity="0.164"/><rect x="100" y="0" width="10" height="10" fill="#000" fill-opacity="0.102"/><rect x="110" y="0" width="10" height="10" fill="#000" fill-opacity="0.168"/><rect x="120" y="0" width="10" height="10" fill="#000" fill-opacity="0.170"/></svg>
<div class="act" style="left:1469px"><svg class="a" style="left:14.5px;top:7.5px" width="11" height="11" viewBox="0 0 11 11"><path d="M0.3 10.7 L0.8 7.8 L8 0.6 Q8.6 0 9.2 0.6 L10.4 1.8 Q11 2.4 10.4 3 L3.2 10.2 Z" fill="#333"/><path d="M0.3 10.7 L0.8 7.8 L3.2 10.2 Z" fill="#fff"/><path d="M0.3 10.7 L0.5 9.5 L1.5 10.5 Z" fill="#333"/></svg><svg class="a" style="left:54px;top:7px" width="11" height="12" viewBox="0 0 11 12"><path d="M0.5 1.8 H10.5 V3.2 H0.5 Z M3.8 0.4 H7.2 V1.8 H3.8 Z M1.5 3.8 H9.5 L9 11.5 H2 Z" fill="#222"/><path d="M3.9 5 V10.3 M5.5 5 V10.3 M7.1 5 V10.3" stroke="#fff" stroke-width=".7"/></svg></div>
</div>
<div class="row" style="top:180px">
<div class="cb" style="left:4px;top:9px"></div>
<div class="pen" style="left:26px;top:12px"><svg width="10" height="10" viewBox="0 0 10 10"><path d="M0.3 9.7 L0.9 7.3 L7.6 0.6 L9.4 2.4 L2.7 9.1 Z" fill="#d3d3d3"/><path d="M0.3 9.7 L0.9 7.3 L2.7 9.1 Z" fill="#e9e9e9"/></svg></div>
<div class="tx" style="left:41px">$ 24.47</div>
<div class="pen" style="left:158px;top:12px"><svg width="10" height="10" viewBox="0 0 10 10"><path d="M0.3 9.7 L0.9 7.3 L7.6 0.6 L9.4 2.4 L2.7 9.1 Z" fill="#d3d3d3"/><path d="M0.3 9.7 L0.9 7.3 L2.7 9.1 Z" fill="#e9e9e9"/></svg></div>
<div class="tx" style="left:174px">$ 133.00</div>
<div class="tx" style="left:290px">eed531f7c0</div>
<div class="pen" style="left:421px;top:12px"><svg width="10" height="10" viewBox="0 0 10 10"><path d="M0.3 9.7 L0.9 7.3 L7.6 0.6 L9.4 2.4 L2.7 9.1 Z" fill="#d3d3d3"/><path d="M0.3 9.7 L0.9 7.3 L2.7 9.1 Z" fill="#e9e9e9"/></svg></div>
<div class="tx" style="left:552px">04/2/2019 08:27:05</div>
<div class="a" style="left:674px;top:0;width:132px;height:7px;background:#fcfcfd"></div><div class="a" style="left:674px;top:27px;width:132px;height:8px;background:#fcfcfd"></div>
<div class="a" style="left:1202px;top:0;width:157px;height:7px;background:#fcfcfd"></div><div class="a" style="left:1202px;top:27px;width:157px;height:8px;background:#fcfcfd"></div>
<svg class="blur" style="left:681px;top:7px" width="100" height="20"><rect x="0" y="0" width="10" height="10" fill="#000" fill-opacity="0.025"/><rect x="10" y="0" width="10" height="10" fill="#000" fill-opacity="0.070"/><rect x="20" y="0" width="10" height="10" fill="#000" fill-opacity="0.057"/><rect x="30" y="0" width="10" height="10" fill="#000" fill-opacity="0.074"/><rect x="40" y="0" width="10" height="10" fill="#000" fill-opacity="0.048"/><rect x="50" y="0" width="10" height="10" fill="#000" fill-opacity="0.077"/><rect x="60" y="0" width="10" height="10" fill="#000" fill-opacity="0.079"/><rect x="70" y="0" width="10" height="10" fill="#000" fill-opacity="0.022"/><rect x="80" y="0" width="10" height="10" fill="#000" fill-opacity="0.025"/><rect x="90" y="0" width="10" height="10" fill="#000" fill-opacity="0.074"/><rect x="0" y="10" width="10" height="10" fill="#000" fill-opacity="0.136"/><rect x="10" y="10" width="10" height="10" fill="#000" fill-opacity="0.058"/><rect x="20" y="10" width="10" height="10" fill="#000" fill-opacity="0.080"/><rect x="30" y="10" width="10" height="10" fill="#000" fill-opacity="0.095"/><rect x="40" y="10" width="10" height="10" fill="#000" fill-opacity="0.065"/><rect x="50" y="10" width="10" height="10" fill="#000" fill-opacity="0.070"/><rect x="60" y="10" width="10" height="10" fill="#000" fill-opacity="0.064"/><rect x="70" y="10" width="10" height="10" fill="#000" fill-opacity="0.071"/><rect x="80" y="10" width="10" height="10" fill="#000" fill-opacity="0.096"/><rect x="90" y="10" width="10" height="10" fill="#000" fill-opacity="0.063"/></svg>
<div class="badge dk" style="left:814px;width:70px">Recurring</div>
<div class="pen" style="left:945px;top:12px"><svg width="10" height="10" viewBox="0 0 10 10"><path d="M0.3 9.7 L0.9 7.3 L7.6 0.6 L9.4 2.4 L2.7 9.1 Z" fill="#d3d3d3"/><path d="M0.3 9.7 L0.9 7.3 L2.7 9.1 Z" fill="#e9e9e9"/></svg></div>
<div class="badge gr" style="left:964px;width:71px">Approved</div>
<div class="badge dk" style="left:1076px;width:59px">Unpaid</div>
<svg class="blur" style="left:1202px;top:7px" width="130" height="20"><rect x="0" y="0" width="10" height="10" fill="#000" fill-opacity="0.050"/><rect x="10" y="0" width="10" height="10" fill="#000" fill-opacity="0.082"/><rect x="20" y="0" width="10" height="10" fill="#000" fill-opacity="0.022"/><rect x="30" y="0" width="10" height="10" fill="#000" fill-opacity="0.066"/><rect x="40" y="0" width="10" height="10" fill="#000" fill-opacity="0.079"/><rect x="50" y="0" width="10" height="10" fill="#000" fill-opacity="0.045"/><rect x="60" y="0" width="10" height="10" fill="#000" fill-opacity="0.038"/><rect x="70" y="0" width="10" height="10" fill="#000" fill-opacity="0.084"/><rect x="80" y="0" width="10" height="10" fill="#000" fill-opacity="0.039"/><rect x="90" y="0" width="10" height="10" fill="#000" fill-opacity="0.035"/><rect x="100" y="0" width="10" height="10" fill="#000" fill-opacity="0.055"/><rect x="110" y="0" width="10" height="10" fill="#000" fill-opacity="0.076"/><rect x="120" y="0" width="10" height="10" fill="#000" fill-opacity="0.028"/><rect x="0" y="10" width="10" height="10" fill="#000" fill-opacity="0.065"/><rect x="10" y="10" width="10" height="10" fill="#000" fill-opacity="0.067"/><rect x="20" y="10" width="10" height="10" fill="#000" fill-opacity="0.122"/><rect x="30" y="10" width="10" height="10" fill="#000" fill-opacity="0.078"/><rect x="40" y="10" width="10" height="10" fill="#000" fill-opacity="0.124"/><rect x="50" y="10" width="10" height="10" fill="#000" fill-opacity="0.049"/><rect x="60" y="10" width="10" height="10" fill="#000" fill-opacity="0.067"/><rect x="70" y="10" width="10" height="10" fill="#000" fill-opacity="0.102"/><rect x="80" y="10" width="10" height="10" fill="#000" fill-opacity="0.127"/><rect x="90" y="10" width="10" height="10" fill="#000" fill-opacity="0.080"/><rect x="100" y="10" width="10" height="10" fill="#000" fill-opacity="0.055"/><rect x="110" y="10" width="10" height="10" fill="#000" fill-opacity="0.043"/><rect x="120" y="10" width="10" height="10" fill="#000" fill-opacity="0.088"/></svg>
<div class="act" style="left:1469px"><svg class="a" style="left:14.5px;top:7.5px" width="11" height="11" viewBox="0 0 11 11"><path d="M0.3 10.7 L0.8 7.8 L8 0.6 Q8.6 0 9.2 0.6 L10.4 1.8 Q11 2.4 10.4 3 L3.2 10.2 Z" fill="#333"/><path d="M0.3 10.7 L0.8 7.8 L3.2 10.2 Z" fill="#fff"/><path d="M0.3 10.7 L0.5 9.5 L1.5 10.5 Z" fill="#333"/></svg><svg class="a" style="left:54px;top:7px" width="11" height="12" viewBox="0 0 11 12"><path d="M0.5 1.8 H10.5 V3.2 H0.5 Z M3.8 0.4 H7.2 V1.8 H3.8 Z M1.5 3.8 H9.5 L9 11.5 H2 Z" fill="#222"/><path d="M3.9 5 V10.3 M5.5 5 V10.3 M7.1 5 V10.3" stroke="#fff" stroke-width=".7"/></svg></div>
</div>
<div class="row odd" style="top:215px">
<div class="cb" style="left:4px;top:9px"></div>
<div class="pen" style="left:26px;top:12px"><svg width="10" height="10" viewBox="0 0 10 10"><path d="M0.3 9.7 L0.9 7.3 L7.6 0.6 L9.4 2.4 L2.7 9.1 Z" fill="#d3d3d3"/><path d="M0.3 9.7 L0.9 7.3 L2.7 9.1 Z" fill="#e9e9e9"/></svg></div>
<div class="tx" style="left:41px">$ 0.00</div>
<div class="pen" style="left:158px;top:12px"><svg width="10" height="10" viewBox="0 0 10 10"><path d="M0.3 9.7 L0.9 7.3 L7.6 0.6 L9.4 2.4 L2.7 9.1 Z" fill="#d3d3d3"/><path d="M0.3 9.7 L0.9 7.3 L2.7 9.1 Z" fill="#e9e9e9"/></svg></div>
<div class="tx" style="left:174px">$ 1.00</div>
<div class="tx" style="left:290px">5d5a82ffd2</div>
<div class="pen" style="left:421px;top:12px"><svg width="10" height="10" viewBox="0 0 10 10"><path d="M0.3 9.7 L0.9 7.3 L7.6 0.6 L9.4 2.4 L2.7 9.1 Z" fill="#d3d3d3"/><path d="M0.3 9.7 L0.9 7.3 L2.7 9.1 Z" fill="#e9e9e9"/></svg></div>
<div class="tx" style="left:552px">04/2/2019 08:11:40</div>
<div class="a" style="left:674px;top:0;width:132px;height:2px;background:#fcfcfd"></div><div class="a" style="left:674px;top:32px;width:132px;height:3px;background:#fcfcfd"></div>
<div class="a" style="left:1202px;top:0;width:157px;height:2px;background:#fcfcfd"></div><div class="a" style="left:1202px;top:32px;width:157px;height:3px;background:#fcfcfd"></div>
<svg class="blur" style="left:681px;top:12px" width="60" height="20"><rect x="0" y="0" width="10" height="10" fill="#000" fill-opacity="0.121"/><rect x="10" y="0" width="10" height="10" fill="#000" fill-opacity="0.189"/><rect x="20" y="0" width="10" height="10" fill="#000" fill-opacity="0.192"/><rect x="30" y="0" width="10" height="10" fill="#000" fill-opacity="0.120"/><rect x="40" y="0" width="10" height="10" fill="#000" fill-opacity="0.131"/><rect x="50" y="0" width="10" height="10" fill="#000" fill-opacity="0.189"/><rect x="30" y="10" width="10" height="10" fill="#000" fill-opacity="0.06"/></svg>
<div class="badge dk" style="left:814px;width:81px">Trial Signup</div>
<div class="pen" style="left:945px;top:12px"><svg width="10" height="10" viewBox="0 0 10 10"><path d="M0.3 9.7 L0.9 7.3 L7.6 0.6 L9.4 2.4 L2.7 9.1 Z" fill="#d3d3d3"/><path d="M0.3 9.7 L0.9 7.3 L2.7 9.1 Z" fill="#e9e9e9"/></svg></div>
<div class="badge bl" style="left:964px;width:63px">Pending</div>
<div class="badge dk" style="left:1076px;width:59px">Unpaid</div>
<svg class="blur" style="left:1202px;top:12px" width="140" height="20"><rect x="0" y="0" width="10" height="10" fill="#000" fill-opacity="0.171"/><rect x="10" y="0" width="10" height="10" fill="#000" fill-opacity="0.189"/><rect x="20" y="0" width="10" height="10" fill="#000" fill-opacity="0.138"/><rect x="30" y="0" width="10" height="10" fill="#000" fill-opacity="0.114"/><rect x="40" y="0" width="10" height="10" fill="#000" fill-opacity="0.132"/><rect x="50" y="0" width="10" height="10" fill="#000" fill-opacity="0.187"/><rect x="60" y="0" width="10" height="10" fill="#000" fill-opacity="0.130"/><rect x="70" y="0" width="10" height="10" fill="#000" fill-opacity="0.138"/><rect x="80" y="0" width="10" height="10" fill="#000" fill-opacity="0.146"/><rect x="90" y="0" width="10" height="10" fill="#000" fill-opacity="0.146"/><rect x="100" y="0" width="10" height="10" fill="#000" fill-opacity="0.145"/><rect x="110" y="0" width="10" height="10" fill="#000" fill-opacity="0.201"/><rect x="120" y="0" width="10" height="10" fill="#000" fill-opacity="0.117"/><rect x="130" y="0" width="10" height="10" fill="#000" fill-opacity="0.101"/></svg>
<div class="act" style="left:1469px"><svg class="a" style="left:14.5px;top:7.5px" width="11" height="11" viewBox="0 0 11 11"><path d="M0.3 10.7 L0.8 7.8 L8 0.6 Q8.6 0 9.2 0.6 L10.4 1.8 Q11 2.4 10.4 3 L3.2 10.2 Z" fill="#333"/><path d="M0.3 10.7 L0.8 7.8 L3.2 10.2 Z" fill="#fff"/><path d="M0.3 10.7 L0.5 9.5 L1.5 10.5 Z" fill="#333"/></svg><svg class="a" style="left:54px;top:7px" width="11" height="12" viewBox="0 0 11 12"><path d="M0.5 1.8 H10.5 V3.2 H0.5 Z M3.8 0.4 H7.2 V1.8 H3.8 Z M1.5 3.8 H9.5 L9 11.5 H2 Z" fill="#222"/><path d="M3.9 5 V10.3 M5.5 5 V10.3 M7.1 5 V10.3" stroke="#fff" stroke-width=".7"/></svg></div>
</div>
<div class="row" style="top:250px">
<div class="cb" style="left:4px;top:9px"></div>
<div class="pen" style="left:26px;top:12px"><svg width="10" height="10" viewBox="0 0 10 10"><path d="M0.3 9.7 L0.9 7.3 L7.6 0.6 L9.4 2.4 L2.7 9.1 Z" fill="#d3d3d3"/><path d="M0.3 9.7 L0.9 7.3 L2.7 9.1 Z" fill="#e9e9e9"/></svg></div>
<div class="tx" style="left:41px">$ 0.00</div>
<div class="pen" style="left:158px;top:12px"><svg width="10" height="10" viewBox="0 0 10 10"><path d="M0.3 9.7 L0.9 7.3 L7.6 0.6 L9.4 2.4 L2.7 9.1 Z" fill="#d3d3d3"/><path d="M0.3 9.7 L0.9 7.3 L2.7 9.1 Z" fill="#e9e9e9"/></svg></div>
<div class="tx" style="left:174px">$ 1.00</div>
<div class="tx" style="left:290px">03f1182c1e</div>
<div class="pen" style="left:421px;top:12px"><svg width="10" height="10" viewBox="0 0 10 10"><path d="M0.3 9.7 L0.9 7.3 L7.6 0.6 L9.4 2.4 L2.7 9.1 Z" fill="#d3d3d3"/><path d="M0.3 9.7 L0.9 7.3 L2.7 9.1 Z" fill="#e9e9e9"/></svg></div>
<div class="tx" style="left:552px">04/2/2019 08:05:57</div>
<div class="a" style="left:674px;top:0;width:132px;height:7px;background:#fcfcfd"></div><div class="a" style="left:674px;top:27px;width:132px;height:8px;background:#fcfcfd"></div>
<div class="a" style="left:1202px;top:0;width:157px;height:7px;background:#fcfcfd"></div><div class="a" style="left:1202px;top:27px;width:157px;height:8px;background:#fcfcfd"></div>
<svg class="blur" style="left:681px;top:7px" width="60" height="20"><rect x="0" y="0" width="10" height="10" fill="#000" fill-opacity="0.095"/><rect x="10" y="0" width="10" height="10" fill="#000" fill-opacity="0.090"/><rect x="20" y="0" width="10" height="10" fill="#000" fill-opacity="0.099"/><rect x="30" y="0" width="10" height="10" fill="#000" fill-opacity="0.055"/><rect x="40" y="0" width="10" height="10" fill="#000" fill-opacity="0.096"/><rect x="50" y="0" width="10" height="10" fill="#000" fill-opacity="0.094"/><rect x="0" y="10" width="10" height="10" fill="#000" fill-opacity="0.054"/><rect x="10" y="10" width="10" height="10" fill="#000" fill-opacity="0.112"/><rect x="20" y="10" width="10" height="10" fill="#000" fill-opacity="0.122"/><rect x="30" y="10" width="10" height="10" fill="#000" fill-opacity="0.103"/><rect x="40" y="10" width="10" height="10" fill="#000" fill-opacity="0.087"/><rect x="50" y="10" width="10" height="10" fill="#000" fill-opacity="0.062"/></svg>
<div class="badge dk" style="left:814px;width:81px">Trial Signup</div>
<div class="pen" style="left:945px;top:12px"><svg width="10" height="10" viewBox="0 0 10 10"><path d="M0.3 9.7 L0.9 7.3 L7.6 0.6 L9.4 2.4 L2.7 9.1 Z" fill="#d3d3d3"/><path d="M0.3 9.7 L0.9 7.3 L2.7 9.1 Z" fill="#e9e9e9"/></svg></div>
<div class="badge bl" style="left:964px;width:63px">Pending</div>
<div class="badge dk" style="left:1076px;width:59px">Unpaid</div>
<svg class="blur" style="left:1202px;top:7px" width="130" height="20"><rect x="0" y="0" width="10" height="10" fill="#000" fill-opacity="0.047"/><rect x="10" y="0" width="10" height="10" fill="#000" fill-opacity="0.038"/><rect x="20" y="0" width="10" height="10" fill="#000" fill-opacity="0.025"/><rect x="30" y="0" width="10" height="10" fill="#000" fill-opacity="0.067"/><rect x="40" y="0" width="10" height="10" fill="#000" fill-opacity="0.043"/><rect x="50" y="0" width="10" height="10" fill="#000" fill-opacity="0.085"/><rect x="60" y="0" width="10" height="10" fill="#000" fill-opacity="0.024"/><rect x="70" y="0" width="10" height="10" fill="#000" fill-opacity="0.092"/><rect x="80" y="0" width="10" height="10" fill="#000" fill-opacity="0.075"/><rect x="90" y="0" width="10" height="10" fill="#000" fill-opacity="0.094"/><rect x="100" y="0" width="10" height="10" fill="#000" fill-opacity="0.092"/><rect x="110" y="0" width="10" height="10" fill="#000" fill-opacity="0.092"/><rect x="120" y="0" width="10" height="10" fill="#000" fill-opacity="0.066"/><rect x="0" y="10" width="10" height="10" fill="#000" fill-opacity="0.031"/><rect x="10" y="10" width="10" height="10" fill="#000" fill-opacity="0.112"/><rect x="20" y="10" width="10" height="10" fill="#000" fill-opacity="0.049"/><rect x="30" y="10" width="10" height="10" fill="#000" fill-opacity="0.063"/><rect x="40" y="10" width="10" height="10" fill="#000" fill-opacity="0.103"/><rect x="50" y="10" width="10" height="10" fill="#000" fill-opacity="0.088"/><rect x="60" y="10" width="10" height="10" fill="#000" fill-opacity="0.076"/><rect x="70" y="10" width="10" height="10" fill="#000" fill-opacity="0.133"/><rect x="80" y="10" width="10" height="10" fill="#000" fill-opacity="0.097"/><rect x="90" y="10" width="10" height="10" fill="#000" fill-opacity="0.068"/><rect x="100" y="10" width="10" height="10" fill="#000" fill-opacity="0.058"/><rect x="110" y="10" width="10" height="10" fill="#000" fill-opacity="0.125"/><rect x="120" y="10" width="10" height="10" fill="#000" fill-opacity="0.082"/></svg>
<div class="act" style="left:1469px"><svg class="a" style="left:14.5px;top:7.5px" width="11" height="11" viewBox="0 0 11 11"><path d="M0.3 10.7 L0.8 7.8 L8 0.6 Q8.6 0 9.2 0.6 L10.4 1.8 Q11 2.4 10.4 3 L3.2 10.2 Z" fill="#333"/><path d="M0.3 10.7 L0.8 7.8 L3.2 10.2 Z" fill="#fff"/><path d="M0.3 10.7 L0.5 9.5 L1.5 10.5 Z" fill="#333"/></svg><svg class="a" style="left:54px;top:7px" width="11" height="12" viewBox="0 0 11 12"><path d="M0.5 1.8 H10.5 V3.2 H0.5 Z M3.8 0.4 H7.2 V1.8 H3.8 Z M1.5 3.8 H9.5 L9 11.5 H2 Z" fill="#222"/><path d="M3.9 5 V10.3 M5.5 5 V10.3 M7.1 5 V10.3" stroke="#fff" stroke-width=".7"/></svg></div>
</div>
<div class="row odd" style="top:285px">
<div class="cb" style="left:4px;top:9px"></div>
<div class="pen" style="left:26px;top:12px"><svg width="10" height="10" viewBox="0 0 10 10"><path d="M0.3 9.7 L0.9 7.3 L7.6 0.6 L9.4 2.4 L2.7 9.1 Z" fill="#d3d3d3"/><path d="M0.3 9.7 L0.9 7.3 L2.7 9.1 Z" fill="#e9e9e9"/></svg></div>
<div class="tx" style="left:41px">$ 0.00</div>
<div class="pen" style="left:158px;top:12px"><svg width="10" height="10" viewBox="0 0 10 10"><path d="M0.3 9.7 L0.9 7.3 L7.6 0.6 L9.4 2.4 L2.7 9.1 Z" fill="#d3d3d3"/><path d="M0.3 9.7 L0.9 7.3 L2.7 9.1 Z" fill="#e9e9e9"/></svg></div>
<div class="tx" style="left:174px">$ 1.00</div>
<div class="tx" style="left:290px">dc55f738d1</div>
<div class="pen" style="left:421px;top:12px"><svg width="10" height="10" viewBox="0 0 10 10"><path d="M0.3 9.7 L0.9 7.3 L7.6 0.6 L9.4 2.4 L2.7 9.1 Z" fill="#d3d3d3"/><path d="M0.3 9.7 L0.9 7.3 L2.7 9.1 Z" fill="#e9e9e9"/></svg></div>
<div class="tx" style="left:552px">04/2/2019 06:40:12</div>
<div class="a" style="left:674px;top:0;width:132px;height:2px;background:#fcfcfd"></div><div class="a" style="left:674px;top:32px;width:132px;height:3px;background:#fcfcfd"></div>
<div class="a" style="left:1202px;top:0;width:157px;height:2px;background:#fcfcfd"></div><div class="a" style="left:1202px;top:32px;width:157px;height:3px;background:#fcfcfd"></div>
<svg class="blur" style="left:681px;top:12px" width="100" height="20"><rect x="0" y="0" width="10" height="10" fill="#000" fill-opacity="0.186"/><rect x="10" y="0" width="10" height="10" fill="#000" fill-opacity="0.139"/><rect x="20" y="0" width="10" height="10" fill="#000" fill-opacity="0.122"/><rect x="30" y="0" width="10" height="10" fill="#000" fill-opacity="0.159"/><rect x="40" y="0" width="10" height="10" fill="#000" fill-opacity="0.190"/><rect x="50" y="0" width="10" height="10" fill="#000" fill-opacity="0.119"/><rect x="60" y="0" width="10" height="10" fill="#000" fill-opacity="0.187"/><rect x="70" y="0" width="10" height="10" fill="#000" fill-opacity="0.201"/><rect x="80" y="0" width="10" height="10" fill="#000" fill-opacity="0.189"/><rect x="90" y="0" width="10" height="10" fill="#000" fill-opacity="0.191"/></svg>
<div class="badge dk" style="left:814px;width:81px">Trial Signup</div>
<div class="pen" style="left:945px;top:12px"><svg width="10" height="10" viewBox="0 0 10 10"><path d="M0.3 9.7 L0.9 7.3 L7.6 0.6 L9.4 2.4 L2.7 9.1 Z" fill="#d3d3d3"/><path d="M0.3 9.7 L0.9 7.3 L2.7 9.1 Z" fill="#e9e9e9"/></svg></div>
<div class="badge bl" style="left:964px;width:63px">Pending</div>
<div class="badge dk" style="left:1076px;width:59px">Unpaid</div>
<svg class="blur" style="left:1202px;top:12px" width="130" height="20"><rect x="0" y="0" width="10" height="10" fill="#000" fill-opacity="0.101"/><rect x="10" y="0" width="10" height="10" fill="#000" fill-opacity="0.169"/><rect x="20" y="0" width="10" height="10" fill="#000" fill-opacity="0.195"/><rect x="30" y="0" width="10" height="10" fill="#000" fill-opacity="0.105"/><rect x="40" y="0" width="10" height="10" fill="#000" fill-opacity="0.130"/><rect x="50" y="0" width="10" height="10" fill="#000" fill-opacity="0.130"/><rect x="60" y="0" width="10" height="10" fill="#000" fill-opacity="0.158"/><rect x="70" y="0" width="10" height="10" fill="#000" fill-opacity="0.147"/><rect x="80" y="0" width="10" height="10" fill="#000" fill-opacity="0.152"/><rect x="90" y="0" width="10" height="10" fill="#000" fill-opacity="0.185"/><rect x="100" y="0" width="10" height="10" fill="#000" fill-opacity="0.100"/><rect x="110" y="0" width="10" height="10" fill="#000" fill-opacity="0.106"/><rect x="120" y="0" width="10" height="10" fill="#000" fill-opacity="0.114"/></svg>
<div class="act" style="left:1469px"><svg class="a" style="left:14.5px;top:7.5px" width="11" height="11" viewBox="0 0 11 11"><path d="M0.3 10.7 L0.8 7.8 L8 0.6 Q8.6 0 9.2 0.6 L10.4 1.8 Q11 2.4 10.4 3 L3.2 10.2 Z" fill="#333"/><path d="M0.3 10.7 L0.8 7.8 L3.2 10.2 Z" fill="#fff"/><path d="M0.3 10.7 L0.5 9.5 L1.5 10.5 Z" fill="#333"/></svg><svg class="a" style="left:54px;top:7px" width="11" height="12" viewBox="0 0 11 12"><path d="M0.5 1.8 H10.5 V3.2 H0.5 Z M3.8 0.4 H7.2 V1.8 H3.8 Z M1.5 3.8 H9.5 L9 11.5 H2 Z" fill="#222"/><path d="M3.9 5 V10.3 M5.5 5 V10.3 M7.1 5 V10.3" stroke="#fff" stroke-width=".7"/></svg></div>
</div>
<div class="row" style="top:320px">
<div class="cb" style="left:4px;top:9px"></div>
<div class="pen" style="left:26px;top:12px"><svg width="10" height="10" viewBox="0 0 10 10"><path d="M0.3 9.7 L0.9 7.3 L7.6 0.6 L9.4 2.4 L2.7 9.1 Z" fill="#d3d3d3"/><path d="M0.3 9.7 L0.9 7.3 L2.7 9.1 Z" fill="#e9e9e9"/></svg></div>
<div class="tx" style="left:41px">$ 0.00</div>
<div class="pen" style="left:158px;top:12px"><svg width="10" height="10" viewBox="0 0 10 10"><path d="M0.3 9.7 L0.9 7.3 L7.6 0.6 L9.4 2.4 L2.7 9.1 Z" fill="#d3d3d3"/><path d="M0.3 9.7 L0.9 7.3 L2.7 9.1 Z" fill="#e9e9e9"/></svg></div>
<div class="tx" style="left:174px">$ 1.00</div>
<div class="tx" style="left:290px">13b07a9918</div>
<div class="pen" style="left:421px;top:12px"><svg width="10" height="10" viewBox="0 0 10 10"><path d="M0.3 9.7 L0.9 7.3 L7.6 0.6 L9.4 2.4 L2.7 9.1 Z" fill="#d3d3d3"/><path d="M0.3 9.7 L0.9 7.3 L2.7 9.1 Z" fill="#e9e9e9"/></svg></div>
<div class="tx" style="left:552px">04/2/2019 06:36:23</div>
<div class="a" style="left:674px;top:0;width:132px;height:7px;background:#fcfcfd"></div><div class="a" style="left:674px;top:27px;width:132px;height:8px;background:#fcfcfd"></div>
<div class="a" style="left:1202px;top:0;width:157px;height:7px;background:#fcfcfd"></div><div class="a" style="left:1202px;top:27px;width:157px;height:8px;background:#fcfcfd"></div>
<svg class="blur" style="left:681px;top:7px" width="100" height="20"><rect x="0" y="0" width="10" height="10" fill="#000" fill-opacity="0.030"/><rect x="10" y="0" width="10" height="10" fill="#000" fill-opacity="0.025"/><rect x="20" y="0" width="10" height="10" fill="#000" fill-opacity="0.098"/><rect x="30" y="0" width="10" height="10" fill="#000" fill-opacity="0.088"/><rect x="40" y="0" width="10" height="10" fill="#000" fill-opacity="0.027"/><rect x="50" y="0" width="10" height="10" fill="#000" fill-opacity="0.060"/><rect x="60" y="0" width="10" height="10" fill="#000" fill-opacity="0.045"/><rect x="70" y="0" width="10" height="10" fill="#000" fill-opacity="0.045"/><rect x="80" y="0" width="10" height="10" fill="#000" fill-opacity="0.048"/><rect x="90" y="0" width="10" height="10" fill="#000" fill-opacity="0.072"/><rect x="0" y="10" width="10" height="10" fill="#000" fill-opacity="0.095"/><rect x="10" y="10" width="10" height="10" fill="#000" fill-opacity="0.070"/><rect x="20" y="10" width="10" height="10" fill="#000" fill-opacity="0.051"/><rect x="30" y="10" width="10" height="10" fill="#000" fill-opacity="0.066"/><rect x="40" y="10" width="10" height="10" fill="#000" fill-opacity="0.044"/><rect x="50" y="10" width="10" height="10" fill="#000" fill-opacity="0.091"/><rect x="60" y="10" width="10" height="10" fill="#000" fill-opacity="0.109"/><rect x="70" y="10" width="10" height="10" fill="#000" fill-opacity="0.072"/><rect x="80" y="10" width="10" height="10" fill="#000" fill-opacity="0.039"/><rect x="90" y="10" width="10" height="10" fill="#000" fill-opacity="0.050"/></svg>
<div class="badge dk" style="left:814px;width:81px">Trial Signup</div>
<div class="pen" style="left:945px;top:12px"><svg width="10" height="10" viewBox="0 0 10 10"><path d="M0.3 9.7 L0.9 7.3 L7.6 0.6 L9.4 2.4 L2.7 9.1 Z" fill="#d3d3d3"/><path d="M0.3 9.7 L0.9 7.3 L2.7 9.1 Z" fill="#e9e9e9"/></svg></div>
<div class="badge bl" style="left:964px;width:63px">Pending</div>
<div class="badge dk" style="left:1076px;width:59px">Unpaid</div>
<svg class="blur" style="left:1202px;top:7px" width="130" height="20"><rect x="0" y="0" width="10" height="10" fill="#000" fill-opacity="0.050"/><rect x="10" y="0" width="10" height="10" fill="#000" fill-opacity="0.068"/><rect x="20" y="0" width="10" height="10" fill="#000" fill-opacity="0.083"/><rect x="30" y="0" width="10" height="10" fill="#000" fill-opacity="0.050"/><rect x="40" y="0" width="10" height="10" fill="#000" fill-opacity="0.084"/><rect x="50" y="0" width="10" height="10" fill="#000" fill-opacity="0.070"/><rect x="60" y="0" width="10" height="10" fill="#000" fill-opacity="0.055"/><rect x="70" y="0" width="10" height="10" fill="#000" fill-opacity="0.050"/><rect x="80" y="0" width="10" height="10" fill="#000" fill-opacity="0.060"/><rect x="90" y="0" width="10" height="10" fill="#000" fill-opacity="0.076"/><rect x="100" y="0" width="10" height="10" fill="#000" fill-opacity="0.054"/><rect x="110" y="0" width="10" height="10" fill="#000" fill-opacity="0.076"/><rect x="120" y="0" width="10" height="10" fill="#000" fill-opacity="0.057"/><rect x="0" y="10" width="10" height="10" fill="#000" fill-opacity="0.057"/><rect x="10" y="10" width="10" height="10" fill="#000" fill-opacity="0.089"/><rect x="20" y="10" width="10" height="10" fill="#000" fill-opacity="0.106"/><rect x="30" y="10" width="10" height="10" fill="#000" fill-opacity="0.038"/><rect x="40" y="10" width="10" height="10" fill="#000" fill-opacity="0.077"/><rect x="50" y="10" width="10" height="10" fill="#000" fill-opacity="0.077"/><rect x="60" y="10" width="10" height="10" fill="#000" fill-opacity="0.127"/><rect x="70" y="10" width="10" height="10" fill="#000" fill-opacity="0.133"/><rect x="80" y="10" width="10" height="10" fill="#000" fill-opacity="0.071"/><rect x="90" y="10" width="10" height="10" fill="#000" fill-opacity="0.129"/><rect x="100" y="10" width="10" height="10" fill="#000" fill-opacity="0.117"/><rect x="110" y="10" width="10" height="10" fill="#000" fill-opacity="0.059"/><rect x="120" y="10" width="10" height="10" fill="#000" fill-opacity="0.081"/></svg>
<div class="act" style="left:1469px"><svg class="a" style="left:14.5px;top:7.5px" width="11" height="11" viewBox="0 0 11 11"><path d="M0.3 10.7 L0.8 7.8 L8 0.6 Q8.6 0 9.2 0.6 L10.4 1.8 Q11 2.4 10.4 3 L3.2 10.2 Z" fill="#333"/><path d="M0.3 10.7 L0.8 7.8 L3.2 10.2 Z" fill="#fff"/><path d="M0.3 10.7 L0.5 9.5 L1.5 10.5 Z" fill="#333"/></svg><svg class="a" style="left:54px;top:7px" width="11" height="12" viewBox="0 0 11 12"><path d="M0.5 1.8 H10.5 V3.2 H0.5 Z M3.8 0.4 H7.2 V1.8 H3.8 Z M1.5 3.8 H9.5 L9 11.5 H2 Z" fill="#222"/><path d="M3.9 5 V10.3 M5.5 5 V10.3 M7.1 5 V10.3" stroke="#fff" stroke-width=".7"/></svg></div>
</div>
<div class="row odd" style="top:355px">
<div class="cb" style="left:4px;top:9px"></div>
<div class="pen" style="left:26px;top:12px"><svg width="10" height="10" viewBox="0 0 10 10"><path d="M0.3 9.7 L0.9 7.3 L7.6 0.6 L9.4 2.4 L2.7 9.1 Z" fill="#d3d3d3"/><path d="M0.3 9.7 L0.9 7.3 L2.7 9.1 Z" fill="#e9e9e9"/></svg></div>
<div class="tx" style="left:41px">$ 2.80</div>
<div class="pen" style="left:158px;top:12px"><svg width="10" height="10" viewBox="0 0 10 10"><path d="M0.3 9.7 L0.9 7.3 L7.6 0.6 L9.4 2.4 L2.7 9.1 Z" fill="#d3d3d3"/><path d="M0.3 9.7 L0.9 7.3 L2.7 9.1 Z" fill="#e9e9e9"/></svg></div>
<div class="tx" style="left:174px">$ 56.00</div>
<div class="tx" style="left:290px">bcb8802a0d</div>
<div class="pen" style="left:421px;top:12px"><svg width="10" height="10" viewBox="0 0 10 10"><path d="M0.3 9.7 L0.9 7.3 L7.6 0.6 L9.4 2.4 L2.7 9.1 Z" fill="#d3d3d3"/><path d="M0.3 9.7 L0.9 7.3 L2.7 9.1 Z" fill="#e9e9e9"/></svg></div>
<div class="tx" style="left:552px">04/2/2019 06:10:08</div>
<div class="a" style="left:674px;top:0;width:132px;height:2px;background:#fcfcfd"></div><div class="a" style="left:674px;top:32px;width:132px;height:3px;background:#fcfcfd"></div>
<div class="a" style="left:1202px;top:0;width:157px;height:2px;background:#fcfcfd"></div><div class="a" style="left:1202px;top:32px;width:157px;height:3px;background:#fcfcfd"></div>
<svg class="blur" style="left:681px;top:12px" width="100" height="20"><rect x="0" y="0" width="10" height="10" fill="#000" fill-opacity="0.114"/><rect x="10" y="0" width="10" height="10" fill="#000" fill-opacity="0.189"/><rect x="20" y="0" width="10" height="10" fill="#000" fill-opacity="0.173"/><rect x="30" y="0" width="10" height="10" fill="#000" fill-opacity="0.198"/><rect x="40" y="0" width="10" height="10" fill="#000" fill-opacity="0.187"/><rect x="50" y="0" width="10" height="10" fill="#000" fill-opacity="0.173"/><rect x="60" y="0" width="10" height="10" fill="#000" fill-opacity="0.181"/><rect x="70" y="0" width="10" height="10" fill="#000" fill-opacity="0.162"/><rect x="80" y="0" width="10" height="10" fill="#000" fill-opacity="0.111"/><rect x="90" y="0" width="10" height="10" fill="#000" fill-opacity="0.165"/></svg>
<div class="badge dk" style="left:814px;width:70px">Recurring</div>
<div class="pen" style="left:945px;top:12px"><svg width="10" height="10" viewBox="0 0 10 10"><path d="M0.3 9.7 L0.9 7.3 L7.6 0.6 L9.4 2.4 L2.7 9.1 Z" fill="#d3d3d3"/><path d="M0.3 9.7 L0.9 7.3 L2.7 9.1 Z" fill="#e9e9e9"/></svg></div>
<div class="badge gr" style="left:964px;width:71px">Approved</div>
<div class="badge dk" style="left:1076px;width:59px">Unpaid</div>
<svg class="blur" style="left:1202px;top:12px" width="120" height="20"><rect x="0" y="0" width="10" height="10" fill="#000" fill-opacity="0.101"/><rect x="10" y="0" width="10" height="10" fill="#000" fill-opacity="0.116"/><rect x="20" y="0" width="10" height="10" fill="#000" fill-opacity="0.185"/><rect x="30" y="0" width="10" height="10" fill="#000" fill-opacity="0.105"/><rect x="40" y="0" width="10" height="10" fill="#000" fill-opacity="0.110"/><rect x="50" y="0" width="10" height="10" fill="#000" fill-opacity="0.111"/><rect x="60" y="0" width="10" height="10" fill="#000" fill-opacity="0.197"/><rect x="70" y="0" width="10" height="10" fill="#000" fill-opacity="0.120"/><rect x="80" y="0" width="10" height="10" fill="#000" fill-opacity="0.103"/><rect x="90" y="0" width="10" height="10" fill="#000" fill-opacity="0.193"/><rect x="100" y="0" width="10" height="10" fill="#000" fill-opacity="0.113"/><rect x="110" y="0" width="10" height="10" fill="#000" fill-opacity="0.193"/><rect x="100" y="10" width="10" height="10" fill="#000" fill-opacity="0.06"/></svg>
<div class="act" style="left:1469px"><svg class="a" style="left:14.5px;top:7.5px" width="11" height="11" viewBox="0 0 11 11"><path d="M0.3 10.7 L0.8 7.8 L8 0.6 Q8.6 0 9.2 0.6 L10.4 1.8 Q11 2.4 10.4 3 L3.2 10.2 Z" fill="#333"/><path d="M0.3 10.7 L0.8 7.8 L3.2 10.2 Z" fill="#fff"/><path d="M0.3 10.7 L0.5 9.5 L1.5 10.5 Z" fill="#333"/></svg><svg class="a" style="left:54px;top:7px" width="11" height="12" viewBox="0 0 11 12"><path d="M0.5 1.8 H10.5 V3.2 H0.5 Z M3.8 0.4 H7.2 V1.8 H3.8 Z M1.5 3.8 H9.5 L9 11.5 H2 Z" fill="#222"/><path d="M3.9 5 V10.3 M5.5 5 V10.3 M7.1 5 V10.3" stroke="#fff" stroke-width=".7"/></svg></div>
</div>
<div class="row" style="top:390px">
<div class="cb" style="left:4px;top:9px"></div>
<div class="pen" style="left:26px;top:12px"><svg width="10" height="10" viewBox="0 0 10 10"><path d="M0.3 9.7 L0.9 7.3 L7.6 0.6 L9.4 2.4 L2.7 9.1 Z" fill="#d3d3d3"/><path d="M0.3 9.7 L0.9 7.3 L2.7 9.1 Z" fill="#e9e9e9"/></svg></div>
<div class="tx" style="left:41px">$ 0.00</div>
<div class="pen" style="left:158px;top:12px"><svg width="10" height="10" viewBox="0 0 10 10"><path d="M0.3 9.7 L0.9 7.3 L7.6 0.6 L9.4 2.4 L2.7 9.1 Z" fill="#d3d3d3"/><path d="M0.3 9.7 L0.9 7.3 L2.7 9.1 Z" fill="#e9e9e9"/></svg></div>
<div class="tx" style="left:174px">$ 1.00</div>
<div class="tx" style="left:290px">ede0ba5b3e</div>
<div class="pen" style="left:421px;top:12px"><svg width="10" height="10" viewBox="0 0 10 10"><path d="M0.3 9.7 L0.9 7.3 L7.6 0.6 L9.4 2.4 L2.7 9.1 Z" fill="#d3d3d3"/><path d="M0.3 9.7 L0.9 7.3 L2.7 9.1 Z" fill="#e9e9e9"/></svg></div>
<div class="tx" style="left:552px">04/2/2019 06:01:39</div>
<div class="a" style="left:674px;top:0;width:132px;height:7px;background:#fcfcfd"></div><div class="a" style="left:674px;top:27px;width:132px;height:8px;background:#fcfcfd"></div>
<div class="a" style="left:1202px;top:0;width:157px;height:7px;background:#fcfcfd"></div><div class="a" style="left:1202px;top:27px;width:157px;height:8px;background:#fcfcfd"></div>
<svg class="blur" style="left:681px;top:7px" width="60" height="20"><rect x="0" y="0" width="10" height="10" fill="#000" fill-opacity="0.074"/><rect x="10" y="0" width="10" height="10" fill="#000" fill-opacity="0.087"/><rect x="20" y="0" width="10" height="10" fill="#000" fill-opacity="0.096"/><rect x="30" y="0" width="10" height="10" fill="#000" fill-opacity="0.066"/><rect x="40" y="0" width="10" height="10" fill="#000" fill-opacity="0.084"/><rect x="50" y="0" width="10" height="10" fill="#000" fill-opacity="0.023"/><rect x="0" y="10" width="10" height="10" fill="#000" fill-opacity="0.114"/><rect x="10" y="10" width="10" height="10" fill="#000" fill-opacity="0.086"/><rect x="20" y="10" width="10" height="10" fill="#000" fill-opacity="0.109"/><rect x="30" y="10" width="10" height="10" fill="#000" fill-opacity="0.042"/><rect x="40" y="10" width="10" height="10" fill="#000" fill-opacity="0.112"/><rect x="50" y="10" width="10" height="10" fill="#000" fill-opacity="0.133"/></svg>
<div class="badge dk" style="left:814px;width:81px">Trial Signup</div>
<div class="pen" style="left:945px;top:12px"><svg width="10" height="10" viewBox="0 0 10 10"><path d="M0.3 9.7 L0.9 7.3 L7.6 0.6 L9.4 2.4 L2.7 9.1 Z" fill="#d3d3d3"/><path d="M0.3 9.7 L0.9 7.3 L2.7 9.1 Z" fill="#e9e9e9"/></svg></div>
<div class="badge bl" style="left:964px;width:63px">Pending</div>
<div class="badge dk" style="left:1076px;width:59px">Unpaid</div>
<svg class="blur" style="left:1202px;top:7px" width="130" height="20"><rect x="0" y="0" width="10" height="10" fill="#000" fill-opacity="0.025"/><rect x="10" y="0" width="10" height="10" fill="#000" fill-opacity="0.046"/><rect x="20" y="0" width="10" height="10" fill="#000" fill-opacity="0.065"/><rect x="30" y="0" width="10" height="10" fill="#000" fill-opacity="0.086"/><rect x="40" y="0" width="10" height="10" fill="#000" fill-opacity="0.039"/><rect x="50" y="0" width="10" height="10" fill="#000" fill-opacity="0.034"/><rect x="60" y="0" width="10" height="10" fill="#000" fill-opacity="0.040"/><rect x="70" y="0" width="10" height="10" fill="#000" fill-opacity="0.069"/><rect x="80" y="0" width="10" height="10" fill="#000" fill-opacity="0.080"/><rect x="90" y="0" width="10" height="10" fill="#000" fill-opacity="0.051"/><rect x="100" y="0" width="10" height="10" fill="#000" fill-opacity="0.049"/><rect x="110" y="0" width="10" height="10" fill="#000" fill-opacity="0.052"/><rect x="120" y="0" width="10" height="10" fill="#000" fill-opacity="0.048"/><rect x="0" y="10" width="10" height="10" fill="#000" fill-opacity="0.076"/><rect x="10" y="10" width="10" height="10" fill="#000" fill-opacity="0.039"/><rect x="20" y="10" width="10" height="10" fill="#000" fill-opacity="0.085"/><rect x="30" y="10" width="10" height="10" fill="#000" fill-opacity="0.137"/><rect x="40" y="10" width="10" height="10" fill="#000" fill-opacity="0.075"/><rect x="50" y="10" width="10" height="10" fill="#000" fill-opacity="0.112"/><rect x="60" y="10" width="10" height="10" fill="#000" fill-opacity="0.048"/><rect x="70" y="10" width="10" height="10" fill="#000" fill-opacity="0.106"/><rect x="80" y="10" width="10" height="10" fill="#000" fill-opacity="0.113"/><rect x="90" y="10" width="10" height="10" fill="#000" fill-opacity="0.104"/><rect x="100" y="10" width="10" height="10" fill="#000" fill-opacity="0.087"/><rect x="110" y="10" width="10" height="10" fill="#000" fill-opacity="0.083"/><rect x="120" y="10" width="10" height="10" fill="#000" fill-opacity="0.101"/></svg>
<div class="act" style="left:1469px"><svg class="a" style="left:14.5px;top:7.5px" width="11" height="11" viewBox="0 0 11 11"><path d="M0.3 10.7 L0.8 7.8 L8 0.6 Q8.6 0 9.2 0.6 L10.4 1.8 Q11 2.4 10.4 3 L3.2 10.2 Z" fill="#333"/><path d="M0.3 10.7 L0.8 7.8 L3.2 10.2 Z" fill="#fff"/><path d="M0.3 10.7 L0.5 9.5 L1.5 10.5 Z" fill="#333"/></svg><svg class="a" style="left:54px;top:7px" width="11" height="12" viewBox="0 0 11 12"><path d="M0.5 1.8 H10.5 V3.2 H0.5 Z M3.8 0.4 H7.2 V1.8 H3.8 Z M1.5 3.8 H9.5 L9 11.5 H2 Z" fill="#222"/><path d="M3.9 5 V10.3 M5.5 5 V10.3 M7.1 5 V10.3" stroke="#fff" stroke-width=".7"/></svg></div>
</div>
<div class="row odd" style="top:425px">
<div class="cb" style="left:4px;top:9px"></div>
<div class="pen" style="left:26px;top:12px"><svg width="10" height="10" viewBox="0 0 10 10"><path d="M0.3 9.7 L0.9 7.3 L7.6 0.6 L9.4 2.4 L2.7 9.1 Z" fill="#d3d3d3"/><path d="M0.3 9.7 L0.9 7.3 L2.7 9.1 Z" fill="#e9e9e9"/></svg></div>
<div class="tx" style="left:41px">$ 1.45</div>
<div class="pen" style="left:158px;top:12px"><svg width="10" height="10" viewBox="0 0 10 10"><path d="M0.3 9.7 L0.9 7.3 L7.6 0.6 L9.4 2.4 L2.7 9.1 Z" fill="#d3d3d3"/><path d="M0.3 9.7 L0.9 7.3 L2.7 9.1 Z" fill="#e9e9e9"/></svg></div>
<div class="tx" style="left:174px">$ 29.00</div>
<div class="tx" style="left:290px">38e71a3b</div>
<div class="pen" style="left:421px;top:12px"><svg width="10" height="10" viewBox="0 0 10 10"><path d="M0.3 9.7 L0.9 7.3 L7.6 0.6 L9.4 2.4 L2.7 9.1 Z" fill="#d3d3d3"/><path d="M0.3 9.7 L0.9 7.3 L2.7 9.1 Z" fill="#e9e9e9"/></svg></div>
<div class="tx" style="left:437px">3bef6257</div>
<div class="tx" style="left:552px">04/2/2019 05:59:05</div>
<div class="a" style="left:674px;top:0;width:132px;height:2px;background:#fcfcfd"></div><div class="a" style="left:674px;top:32px;width:132px;height:3px;background:#fcfcfd"></div>
<div class="a" style="left:1202px;top:0;width:157px;height:2px;background:#fcfcfd"></div><div class="a" style="left:1202px;top:32px;width:157px;height:3px;background:#fcfcfd"></div>
<svg class="blur" style="left:681px;top:12px" width="130" height="20"><rect x="0" y="0" width="10" height="10" fill="#000" fill-opacity="0.199"/><rect x="10" y="0" width="10" height="10" fill="#000" fill-opacity="0.116"/><rect x="20" y="0" width="10" height="10" fill="#000" fill-opacity="0.111"/><rect x="30" y="0" width="10" height="10" fill="#000" fill-opacity="0.182"/><rect x="40" y="0" width="10" height="10" fill="#000" fill-opacity="0.201"/><rect x="50" y="0" width="10" height="10" fill="#000" fill-opacity="0.157"/><rect x="60" y="0" width="10" height="10" fill="#000" fill-opacity="0.149"/><rect x="70" y="0" width="10" height="10" fill="#000" fill-opacity="0.179"/><rect x="80" y="0" width="10" height="10" fill="#000" fill-opacity="0.120"/><rect x="90" y="0" width="10" height="10" fill="#000" fill-opacity="0.129"/><rect x="100" y="0" width="10" height="10" fill="#000" fill-opacity="0.122"/><rect x="110" y="0" width="10" height="10" fill="#000" fill-opacity="0.164"/><rect x="120" y="0" width="10" height="10" fill="#000" fill-opacity="0.135"/></svg>
<div class="badge dk" style="left:814px;width:70px">Recurring</div>
<div class="pen" style="left:945px;top:12px"><svg width="10" height="10" viewBox="0 0 10 10"><path d="M0.3 9.7 L0.9 7.3 L7.6 0.6 L9.4 2.4 L2.7 9.1 Z" fill="#d3d3d3"/><path d="M0.3 9.7 L0.9 7.3 L2.7 9.1 Z" fill="#e9e9e9"/></svg></div>
<div class="badge gr" style="left:964px;width:71px">Approved</div>
<div class="badge dk" style="left:1076px;width:59px">Unpaid</div>
<svg class="blur" style="left:1202px;top:12px" width="130" height="20"><rect x="0" y="0" width="10" height="10" fill="#000" fill-opacity="0.126"/><rect x="10" y="0" width="10" height="10" fill="#000" fill-opacity="0.176"/><rect x="20" y="0" width="10" height="10" fill="#000" fill-opacity="0.205"/><rect x="30" y="0" width="10" height="10" fill="#000" fill-opacity="0.133"/><rect x="40" y="0" width="10" height="10" fill="#000" fill-opacity="0.178"/><rect x="50" y="0" width="10" height="10" fill="#000" fill-opacity="0.145"/><rect x="60" y="0" width="10" height="10" fill="#000" fill-opacity="0.194"/><rect x="70" y="0" width="10" height="10" fill="#000" fill-opacity="0.164"/><rect x="80" y="0" width="10" height="10" fill="#000" fill-opacity="0.129"/><rect x="90" y="0" width="10" height="10" fill="#000" fill-opacity="0.124"/><rect x="100" y="0" width="10" height="10" fill="#000" fill-opacity="0.103"/><rect x="110" y="0" width="10" height="10" fill="#000" fill-opacity="0.153"/><rect x="120" y="0" width="10" height="10" fill="#000" fill-opacity="0.142"/></svg>
<div class="act" style="left:1469px"><svg class="a" style="left:14.5px;top:7.5px" width="11" height="11" viewBox="0 0 11 11"><path d="M0.3 10.7 L0.8 7.8 L8 0.6 Q8.6 0 9.2 0.6 L10.4 1.8 Q11 2.4 10.4 3 L3.2 10.2 Z" fill="#333"/><path d="M0.3 10.7 L0.8 7.8 L3.2 10.2 Z" fill="#fff"/><path d="M0.3 10.7 L0.5 9.5 L1.5 10.5 Z" fill="#333"/></svg><svg class="a" style="left:54px;top:7px" width="11" height="12" viewBox="0 0 11 12"><path d="M0.5 1.8 H10.5 V3.2 H0.5 Z M3.8 0.4 H7.2 V1.8 H3.8 Z M1.5 3.8 H9.5 L9 11.5 H2 Z" fill="#222"/><path d="M3.9 5 V10.3 M5.5 5 V10.3 M7.1 5 V10.3" stroke="#fff" stroke-width=".7"/></svg></div>
</div>
<div class="row" style="top:460px">
<div class="cb" style="left:4px;top:9px"></div>
<div class="pen" style="left:26px;top:12px"><svg width="10" height="10" viewBox="0 0 10 10"><path d="M0.3 9.7 L0.9 7.3 L7.6 0.6 L9.4 2.4 L2.7 9.1 Z" fill="#d3d3d3"/><path d="M0.3 9.7 L0.9 7.3 L2.7 9.1 Z" fill="#e9e9e9"/></svg></div>
<div class="tx" style="left:41px">$ 0.00</div>
<div class="pen" style="left:158px;top:12px"><svg width="10" height="10" viewBox="0 0 10 10"><path d="M0.3 9.7 L0.9 7.3 L7.6 0.6 L9.4 2.4 L2.7 9.1 Z" fill="#d3d3d3"/><path d="M0.3 9.7 L0.9 7.3 L2.7 9.1 Z" fill="#e9e9e9"/></svg></div>
<div class="tx" style="left:174px">$ 1.00</div>
<div class="tx" style="left:290px">6a443d4187</div>
<div class="pen" style="left:421px;top:12px"><svg width="10" height="10" viewBox="0 0 10 10"><path d="M0.3 9.7 L0.9 7.3 L7.6 0.6 L9.4 2.4 L2.7 9.1 Z" fill="#d3d3d3"/><path d="M0.3 9.7 L0.9 7.3 L2.7 9.1 Z" fill="#e9e9e9"/></svg></div>
<div class="tx" style="left:552px">04/2/2019 05:46:17</div>
<div class="a" style="left:674px;top:0;width:132px;height:7px;background:#fcfcfd"></div><div class="a" style="left:674px;top:27px;width:132px;height:8px;background:#fcfcfd"></div>
<div class="a" style="left:1202px;top:0;width:157px;height:7px;background:#fcfcfd"></div><div class="a" style="left:1202px;top:27px;width:157px;height:8px;background:#fcfcfd"></div>
<svg class="blur" style="left:681px;top:7px" width="60" height="20"><rect x="0" y="0" width="10" height="10" fill="#000" fill-opacity="0.034"/><rect x="10" y="0" width="10" height="10" fill="#000" fill-opacity="0.049"/><rect x="20" y="0" width="10" height="10" fill="#000" fill-opacity="0.046"/><rect x="30" y="0" width="10" height="10" fill="#000" fill-opacity="0.082"/><rect x="40" y="0" width="10" height="10" fill="#000" fill-opacity="0.031"/><rect x="50" y="0" width="10" height="10" fill="#000" fill-opacity="0.099"/><rect x="0" y="10" width="10" height="10" fill="#000" fill-opacity="0.083"/><rect x="10" y="10" width="10" height="10" fill="#000" fill-opacity="0.096"/><rect x="20" y="10" width="10" height="10" fill="#000" fill-opacity="0.081"/><rect x="30" y="10" width="10" height="10" fill="#000" fill-opacity="0.122"/><rect x="40" y="10" width="10" height="10" fill="#000" fill-opacity="0.120"/><rect x="50" y="10" width="10" height="10" fill="#000" fill-opacity="0.091"/></svg>
<div class="badge dk" style="left:814px;width:81px">Trial Signup</div>
<div class="pen" style="left:945px;top:12px"><svg width="10" height="10" viewBox="0 0 10 10"><path d="M0.3 9.7 L0.9 7.3 L7.6 0.6 L9.4 2.4 L2.7 9.1 Z" fill="#d3d3d3"/><path d="M0.3 9.7 L0.9 7.3 L2.7 9.1 Z" fill="#e9e9e9"/></svg></div>
<div class="badge bl" style="left:964px;width:63px">Pending</div>
<div class="badge dk" style="left:1076px;width:59px">Unpaid</div>
<svg class="blur" style="left:1202px;top:7px" width="140" height="20"><rect x="0" y="0" width="10" height="10" fill="#000" fill-opacity="0.059"/><rect x="10" y="0" width="10" height="10" fill="#000" fill-opacity="0.078"/><rect x="20" y="0" width="10" height="10" fill="#000" fill-opacity="0.089"/><rect x="30" y="0" width="10" height="10" fill="#000" fill-opacity="0.052"/><rect x="40" y="0" width="10" height="10" fill="#000" fill-opacity="0.079"/><rect x="50" y="0" width="10" height="10" fill="#000" fill-opacity="0.097"/><rect x="60" y="0" width="10" height="10" fill="#000" fill-opacity="0.057"/><rect x="70" y="0" width="10" height="10" fill="#000" fill-opacity="0.038"/><rect x="80" y="0" width="10" height="10" fill="#000" fill-opacity="0.039"/><rect x="90" y="0" width="10" height="10" fill="#000" fill-opacity="0.077"/><rect x="100" y="0" width="10" height="10" fill="#000" fill-opacity="0.074"/><rect x="110" y="0" width="10" height="10" fill="#000" fill-opacity="0.097"/><rect x="120" y="0" width="10" height="10" fill="#000" fill-opacity="0.088"/><rect x="130" y="0" width="10" height="10" fill="#000" fill-opacity="0.039"/><rect x="0" y="10" width="10" height="10" fill="#000" fill-opacity="0.051"/><rect x="10" y="10" width="10" height="10" fill="#000" fill-opacity="0.058"/><rect x="20" y="10" width="10" height="10" fill="#000" fill-opacity="0.051"/><rect x="30" y="10" width="10" height="10" fill="#000" fill-opacity="0.108"/><rect x="40" y="10" width="10" height="10" fill="#000" fill-opacity="0.124"/><rect x="50" y="10" width="10" height="10" fill="#000" fill-opacity="0.129"/><rect x="60" y="10" width="10" height="10" fill="#000" fill-opacity="0.058"/><rect x="70" y="10" width="10" height="10" fill="#000" fill-opacity="0.125"/><rect x="80" y="10" width="10" height="10" fill="#000" fill-opacity="0.064"/><rect x="90" y="10" width="10" height="10" fill="#000" fill-opacity="0.077"/><rect x="100" y="10" width="10" height="10" fill="#000" fill-opacity="0.110"/><rect x="110" y="10" width="10" height="10" fill="#000" fill-opacity="0.039"/><rect x="120" y="10" width="10" height="10" fill="#000" fill-opacity="0.040"/><rect x="130" y="10" width="10" height="10" fill="#000" fill-opacity="0.122"/></svg>
<div class="act" style="left:1469px"><svg class="a" style="left:14.5px;top:7.5px" width="11" height="11" viewBox="0 0 11 11"><path d="M0.3 10.7 L0.8 7.8 L8 0.6 Q8.6 0 9.2 0.6 L10.4 1.8 Q11 2.4 10.4 3 L3.2 10.2 Z" fill="#333"/><path d="M0.3 10.7 L0.8 7.8 L3.2 10.2 Z" fill="#fff"/><path d="M0.3 10.7 L0.5 9.5 L1.5 10.5 Z" fill="#333"/></svg><svg class="a" style="left:54px;top:7px" width="11" height="12" viewBox="0 0 11 12"><path d="M0.5 1.8 H10.5 V3.2 H0.5 Z M3.8 0.4 H7.2 V1.8 H3.8 Z M1.5 3.8 H9.5 L9 11.5 H2 Z" fill="#222"/><path d="M3.9 5 V10.3 M5.5 5 V10.3 M7.1 5 V10.3" stroke="#fff" stroke-width=".7"/></svg></div>
</div>
<div class="row odd" style="top:495px">
<div class="cb" style="left:4px;top:9px"></div>
<div class="pen" style="left:26px;top:12px"><svg width="10" height="10" viewBox="0 0 10 10"><path d="M0.3 9.7 L0.9 7.3 L7.6 0.6 L9.4 2.4 L2.7 9.1 Z" fill="#d3d3d3"/><path d="M0.3 9.7 L0.9 7.3 L2.7 9.1 Z" fill="#e9e9e9"/></svg></div>
<div class="tx" style="left:41px">$ 6.76</div>
<div class="pen" style="left:158px;top:12px"><svg width="10" height="10" viewBox="0 0 10 10"><path d="M0.3 9.7 L0.9 7.3 L7.6 0.6 L9.4 2.4 L2.7 9.1 Z" fill="#d3d3d3"/><path d="M0.3 9.7 L0.9 7.3 L2.7 9.1 Z" fill="#e9e9e9"/></svg></div>
<div class="tx" style="left:174px">$ 36.72</div>
<div class="tx" style="left:290px">1595ee33b2</div>
<div class="pen" style="left:421px;top:12px"><svg width="10" height="10" viewBox="0 0 10 10"><path d="M0.3 9.7 L0.9 7.3 L7.6 0.6 L9.4 2.4 L2.7 9.1 Z" fill="#d3d3d3"/><path d="M0.3 9.7 L0.9 7.3 L2.7 9.1 Z" fill="#e9e9e9"/></svg></div>
<div class="tx" style="left:552px">04/2/2019 05:37:04</div>
<div class="a" style="left:674px;top:0;width:132px;height:2px;background:#fcfcfd"></div><div class="a" style="left:674px;top:32px;width:132px;height:3px;background:#fcfcfd"></div>
<div class="a" style="left:1202px;top:0;width:157px;height:2px;background:#fcfcfd"></div><div class="a" style="left:1202px;top:32px;width:157px;height:3px;background:#fcfcfd"></div>
<svg class="blur" style="left:681px;top:12px" width="60" height="20"><rect x="0" y="0" width="10" height="10" fill="#000" fill-opacity="0.132"/><rect x="10" y="0" width="10" height="10" fill="#000" fill-opacity="0.139"/><rect x="20" y="0" width="10" height="10" fill="#000" fill-opacity="0.164"/><rect x="30" y="0" width="10" height="10" fill="#000" fill-opacity="0.174"/><rect x="40" y="0" width="10" height="10" fill="#000" fill-opacity="0.101"/><rect x="50" y="0" width="10" height="10" fill="#000" fill-opacity="0.137"/><rect x="30" y="10" width="10" height="10" fill="#000" fill-opacity="0.06"/></svg>
<div class="badge dk" style="left:814px;width:70px">Recurring</div>
<div class="pen" style="left:945px;top:12px"><svg width="10" height="10" viewBox="0 0 10 10"><path d="M0.3 9.7 L0.9 7.3 L7.6 0.6 L9.4 2.4 L2.7 9.1 Z" fill="#d3d3d3"/><path d="M0.3 9.7 L0.9 7.3 L2.7 9.1 Z" fill="#e9e9e9"/></svg></div>
<div class="badge gr" style="left:964px;width:71px">Approved</div>
<div class="badge dk" style="left:1076px;width:59px">Unpaid</div>
<svg class="blur" style="left:1202px;top:12px" width="140" height="20"><rect x="0" y="0" width="10" height="10" fill="#000" fill-opacity="0.148"/><rect x="10" y="0" width="10" height="10" fill="#000" fill-opacity="0.153"/><rect x="20" y="0" width="10" height="10" fill="#000" fill-opacity="0.123"/><rect x="30" y="0" width="10" height="10" fill="#000" fill-opacity="0.164"/><rect x="40" y="0" width="10" height="10" fill="#000" fill-opacity="0.205"/><rect x="50" y="0" width="10" height="10" fill="#000" fill-opacity="0.143"/><rect x="60" y="0" width="10" height="10" fill="#000" fill-opacity="0.160"/><rect x="70" y="0" width="10" height="10" fill="#000" fill-opacity="0.113"/><rect x="80" y="0" width="10" height="10" fill="#000" fill-opacity="0.130"/><rect x="90" y="0" width="10" height="10" fill="#000" fill-opacity="0.173"/><rect x="100" y="0" width="10" height="10" fill="#000" fill-opacity="0.112"/><rect x="110" y="0" width="10" height="10" fill="#000" fill-opacity="0.198"/><rect x="120" y="0" width="10" height="10" fill="#000" fill-opacity="0.200"/><rect x="130" y="0" width="10" height="10" fill="#000" fill-opacity="0.111"/></svg>
<div class="act" style="left:1469px"><svg class="a" style="left:14.5px;top:7.5px" width="11" height="11" viewBox="0 0 11 11"><path d="M0.3 10.7 L0.8 7.8 L8 0.6 Q8.6 0 9.2 0.6 L10.4 1.8 Q11 2.4 10.4 3 L3.2 10.2 Z" fill="#333"/><path d="M0.3 10.7 L0.8 7.8 L3.2 10.2 Z" fill="#fff"/><path d="M0.3 10.7 L0.5 9.5 L1.5 10.5 Z" fill="#333"/></svg><svg class="a" style="left:54px;top:7px" width="11" height="12" viewBox="0 0 11 12"><path d="M0.5 1.8 H10.5 V3.2 H0.5 Z M3.8 0.4 H7.2 V1.8 H3.8 Z M1.5 3.8 H9.5 L9 11.5 H2 Z" fill="#222"/><path d="M3.9 5 V10.3 M5.5 5 V10.3 M7.1 5 V10.3" stroke="#fff" stroke-width=".7"/></svg></div>
</div>
<div class="row" style="top:530px">
<div class="cb" style="left:4px;top:9px"></div>
<div class="pen" style="left:26px;top:12px"><svg width="10" height="10" viewBox="0 0 10 10"><path d="M0.3 9.7 L0.9 7.3 L7.6 0.6 L9.4 2.4 L2.7 9.1 Z" fill="#d3d3d3"/><path d="M0.3 9.7 L0.9 7.3 L2.7 9.1 Z" fill="#e9e9e9"/></svg></div>
<div class="tx" style="left:41px">$ 0.00</div>
<div class="pen" style="left:158px;top:12px"><svg width="10" height="10" viewBox="0 0 10 10"><path d="M0.3 9.7 L0.9 7.3 L7.6 0.6 L9.4 2.4 L2.7 9.1 Z" fill="#d3d3d3"/><path d="M0.3 9.7 L0.9 7.3 L2.7 9.1 Z" fill="#e9e9e9"/></svg></div>
<div class="tx" style="left:174px">$ 1.00</div>
<div class="tx" style="left:290px">b88f667f91</div>
<div class="pen" style="left:421px;top:12px"><svg width="10" height="10" viewBox="0 0 10 10"><path d="M0.3 9.7 L0.9 7.3 L7.6 0.6 L9.4 2.4 L2.7 9.1 Z" fill="#d3d3d3"/><path d="M0.3 9.7 L0.9 7.3 L2.7 9.1 Z" fill="#e9e9e9"/></svg></div>
<div class="tx" style="left:552px">04/2/2019 05:08:34</div>
<div class="a" style="left:674px;top:0;width:132px;height:7px;background:#fcfcfd"></div><div class="a" style="left:674px;top:27px;width:132px;height:8px;background:#fcfcfd"></div>
<div class="a" style="left:1202px;top:0;width:157px;height:7px;background:#fcfcfd"></div><div class="a" style="left:1202px;top:27px;width:157px;height:8px;background:#fcfcfd"></div>
<svg class="blur" style="left:681px;top:7px" width="100" height="20"><rect x="0" y="0" width="10" height="10" fill="#000" fill-opacity="0.095"/><rect x="10" y="0" width="10" height="10" fill="#000" fill-opacity="0.050"/><rect x="20" y="0" width="10" height="10" fill="#000" fill-opacity="0.082"/><rect x="30" y="0" width="10" height="10" fill="#000" fill-opacity="0.081"/><rect x="40" y="0" width="10" height="10" fill="#000" fill-opacity="0.044"/><rect x="50" y="0" width="10" height="10" fill="#000" fill-opacity="0.074"/><rect x="60" y="0" width="10" height="10" fill="#000" fill-opacity="0.072"/><rect x="70" y="0" width="10" height="10" fill="#000" fill-opacity="0.084"/><rect x="80" y="0" width="10" height="10" fill="#000" fill-opacity="0.041"/><rect x="90" y="0" width="10" height="10" fill="#000" fill-opacity="0.080"/><rect x="0" y="10" width="10" height="10" fill="#000" fill-opacity="0.136"/><rect x="10" y="10" width="10" height="10" fill="#000" fill-opacity="0.104"/><rect x="20" y="10" width="10" height="10" fill="#000" fill-opacity="0.089"/><rect x="30" y="10" width="10" height="10" fill="#000" fill-opacity="0.042"/><rect x="40" y="10" width="10" height="10" fill="#000" fill-opacity="0.084"/><rect x="50" y="10" width="10" height="10" fill="#000" fill-opacity="0.069"/><rect x="60" y="10" width="10" height="10" fill="#000" fill-opacity="0.109"/><rect x="70" y="10" width="10" height="10" fill="#000" fill-opacity="0.105"/><rect x="80" y="10" width="10" height="10" fill="#000" fill-opacity="0.092"/><rect x="90" y="10" width="10" height="10" fill="#000" fill-opacity="0.050"/></svg>
<div class="badge dk" style="left:814px;width:81px">Trial Signup</div>
<div class="pen" style="left:945px;top:12px"><svg width="10" height="10" viewBox="0 0 10 10"><path d="M0.3 9.7 L0.9 7.3 L7.6 0.6 L9.4 2.4 L2.7 9.1 Z" fill="#d3d3d3"/><path d="M0.3 9.7 L0.9 7.3 L2.7 9.1 Z" fill="#e9e9e9"/></svg></div>
<div class="badge bl" style="left:964px;width:63px">Pending</div>
<div class="badge dk" style="left:1076px;width:59px">Unpaid</div>
<svg class="blur" style="left:1202px;top:7px" width="110" height="20"><rect x="0" y="0" width="10" height="10" fill="#000" fill-opacity="0.072"/><rect x="10" y="0" width="10" height="10" fill="#000" fill-opacity="0.070"/><rect x="20" y="0" width="10" height="10" fill="#000" fill-opacity="0.034"/><rect x="30" y="0" width="10" height="10" fill="#000" fill-opacity="0.091"/><rect x="40" y="0" width="10" height="10" fill="#000" fill-opacity="0.072"/><rect x="50" y="0" width="10" height="10" fill="#000" fill-opacity="0.030"/><rect x="60" y="0" width="10" height="10" fill="#000" fill-opacity="0.095"/><rect x="70" y="0" width="10" height="10" fill="#000" fill-opacity="0.031"/><rect x="80" y="0" width="10" height="10" fill="#000" fill-opacity="0.047"/><rect x="90" y="0" width="10" height="10" fill="#000" fill-opacity="0.078"/><rect x="100" y="0" width="10" height="10" fill="#000" fill-opacity="0.068"/><rect x="0" y="10" width="10" height="10" fill="#000" fill-opacity="0.091"/><rect x="10" y="10" width="10" height="10" fill="#000" fill-opacity="0.101"/><rect x="20" y="10" width="10" height="10" fill="#000" fill-opacity="0.080"/><rect x="30" y="10" width="10" height="10" fill="#000" fill-opacity="0.064"/><rect x="40" y="10" width="10" height="10" fill="#000" fill-opacity="0.049"/><rect x="50" y="10" width="10" height="10" fill="#000" fill-opacity="0.038"/><rect x="60" y="10" width="10" height="10" fill="#000" fill-opacity="0.109"/><rect x="70" y="10" width="10" height="10" fill="#000" fill-opacity="0.113"/><rect x="80" y="10" width="10" height="10" fill="#000" fill-opacity="0.090"/><rect x="90" y="10" width="10" height="10" fill="#000" fill-opacity="0.111"/><rect x="100" y="10" width="10" height="10" fill="#000" fill-opacity="0.070"/></svg>
<div class="act" style="left:1469px"><svg class="a" style="left:14.5px;top:7.5px" width="11" height="11" viewBox="0 0 11 11"><path d="M0.3 10.7 L0.8 7.8 L8 0.6 Q8.6 0 9.2 0.6 L10.4 1.8 Q11 2.4 10.4 3 L3.2 10.2 Z" fill="#333"/><path d="M0.3 10.7 L0.8 7.8 L3.2 10.2 Z" fill="#fff"/><path d="M0.3 10.7 L0.5 9.5 L1.5 10.5 Z" fill="#333"/></svg><svg class="a" style="left:54px;top:7px" width="11" height="12" viewBox="0 0 11 12"><path d="M0.5 1.8 H10.5 V3.2 H0.5 Z M3.8 0.4 H7.2 V1.8 H3.8 Z M1.5 3.8 H9.5 L9 11.5 H2 Z" fill="#222"/><path d="M3.9 5 V10.3 M5.5 5 V10.3 M7.1 5 V10.3" stroke="#fff" stroke-width=".7"/></svg></div>
</div>
<div class="row odd" style="top:565px">
<div class="cb" style="left:4px;top:9px"></div>
<div class="pen" style="left:26px;top:12px"><svg width="10" height="10" viewBox="0 0 10 10"><path d="M0.3 9.7 L0.9 7.3 L7.6 0.6 L9.4 2.4 L2.7 9.1 Z" fill="#d3d3d3"/><path d="M0.3 9.7 L0.9 7.3 L2.7 9.1 Z" fill="#e9e9e9"/></svg></div>
<div class="tx" style="left:41px">$ 1.47</div>
<div class="pen" style="left:158px;top:12px"><svg width="10" height="10" viewBox="0 0 10 10"><path d="M0.3 9.7 L0.9 7.3 L7.6 0.6 L9.4 2.4 L2.7 9.1 Z" fill="#d3d3d3"/><path d="M0.3 9.7 L0.9 7.3 L2.7 9.1 Z" fill="#e9e9e9"/></svg></div>
<div class="tx" style="left:174px">$ 8.00</div>
<div class="tx" style="left:290px">5d0f815d67</div>
<div class="pen" style="left:421px;top:12px"><svg width="10" height="10" viewBox="0 0 10 10"><path d="M0.3 9.7 L0.9 7.3 L7.6 0.6 L9.4 2.4 L2.7 9.1 Z" fill="#d3d3d3"/><path d="M0.3 9.7 L0.9 7.3 L2.7 9.1 Z" fill="#e9e9e9"/></svg></div>
<div class="tx" style="left:552px">04/2/2019 04:42:06</div>
<div class="a" style="left:674px;top:0;width:132px;height:2px;background:#fcfcfd"></div><div class="a" style="left:674px;top:32px;width:132px;height:3px;background:#fcfcfd"></div>
<div class="a" style="left:1202px;top:0;width:157px;height:2px;background:#fcfcfd"></div><div class="a" style="left:1202px;top:32px;width:157px;height:3px;background:#fcfcfd"></div>
<svg class="blur" style="left:681px;top:12px" width="60" height="20"><rect x="0" y="0" width="10" height="10" fill="#000" fill-opacity="0.129"/><rect x="10" y="0" width="10" height="10" fill="#000" fill-opacity="0.142"/><rect x="20" y="0" width="10" height="10" fill="#000" fill-opacity="0.196"/><rect x="30" y="0" width="10" height="10" fill="#000" fill-opacity="0.105"/><rect x="40" y="0" width="10" height="10" fill="#000" fill-opacity="0.156"/><rect x="50" y="0" width="10" height="10" fill="#000" fill-opacity="0.127"/><rect x="30" y="10" width="10" height="10" fill="#000" fill-opacity="0.06"/></svg>
<div class="badge dk" style="left:814px;width:70px">Recurring</div>
<div class="pen" style="left:945px;top:12px"><svg width="10" height="10" viewBox="0 0 10 10"><path d="M0.3 9.7 L0.9 7.3 L7.6 0.6 L9.4 2.4 L2.7 9.1 Z" fill="#d3d3d3"/><path d="M0.3 9.7 L0.9 7.3 L2.7 9.1 Z" fill="#e9e9e9"/></svg></div>
<div class="badge gr" style="left:964px;width:71px">Approved</div>
<div class="badge dk" style="left:1076px;width:59px">Unpaid</div>
<svg class="blur" style="left:1202px;top:12px" width="140" height="20"><rect x="0" y="0" width="10" height="10" fill="#000" fill-opacity="0.185"/><rect x="10" y="0" width="10" height="10" fill="#000" fill-opacity="0.139"/><rect x="20" y="0" width="10" height="10" fill="#000" fill-opacity="0.137"/><rect x="30" y="0" width="10" height="10" fill="#000" fill-opacity="0.144"/><rect x="40" y="0" width="10" height="10" fill="#000" fill-opacity="0.160"/><rect x="50" y="0" width="10" height="10" fill="#000" fill-opacity="0.185"/><rect x="60" y="0" width="10" height="10" fill="#000" fill-opacity="0.139"/><rect x="70" y="0" width="10" height="10" fill="#000" fill-opacity="0.193"/><rect x="80" y="0" width="10" height="10" fill="#000" fill-opacity="0.112"/><rect x="90" y="0" width="10" height="10" fill="#000" fill-opacity="0.130"/><rect x="100" y="0" width="10" height="10" fill="#000" fill-opacity="0.111"/><rect x="110" y="0" width="10" height="10" fill="#000" fill-opacity="0.112"/><rect x="120" y="0" width="10" height="10" fill="#000" fill-opacity="0.186"/><rect x="130" y="0" width="10" height="10" fill="#000" fill-opacity="0.180"/></svg>
<div class="act" style="left:1469px"><svg class="a" style="left:14.5px;top:7.5px" width="11" height="11" viewBox="0 0 11 11"><path d="M0.3 10.7 L0.8 7.8 L8 0.6 Q8.6 0 9.2 0.6 L10.4 1.8 Q11 2.4 10.4 3 L3.2 10.2 Z" fill="#333"/><path d="M0.3 10.7 L0.8 7.8 L3.2 10.2 Z" fill="#fff"/><path d="M0.3 10.7 L0.5 9.5 L1.5 10.5 Z" fill="#333"/></svg><svg class="a" style="left:54px;top:7px" width="11" height="12" viewBox="0 0 11 12"><path d="M0.5 1.8 H10.5 V3.2 H0.5 Z M3.8 0.4 H7.2 V1.8 H3.8 Z M1.5 3.8 H9.5 L9 11.5 H2 Z" fill="#222"/><path d="M3.9 5 V10.3 M5.5 5 V10.3 M7.1 5 V10.3" stroke="#fff" stroke-width=".7"/></svg></div>
</div>
<div class="row" style="top:600px">
<div class="cb" style="left:4px;top:9px"></div>
<div class="pen" style="left:26px;top:12px"><svg width="10" height="10" viewBox="0 0 10 10"><path d="M0.3 9.7 L0.9 7.3 L7.6 0.6 L9.4 2.4 L2.7 9.1 Z" fill="#d3d3d3"/><path d="M0.3 9.7 L0.9 7.3 L2.7 9.1 Z" fill="#e9e9e9"/></svg></div>
<div class="tx" style="left:41px">$ 0.00</div>
<div class="pen" style="left:158px;top:12px"><svg width="10" height="10" viewBox="0 0 10 10"><path d="M0.3 9.7 L0.9 7.3 L7.6 0.6 L9.4 2.4 L2.7 9.1 Z" fill="#d3d3d3"/><path d="M0.3 9.7 L0.9 7.3 L2.7 9.1 Z" fill="#e9e9e9"/></svg></div>
<div class="tx" style="left:174px">$ 1.00</div>
<div class="tx" style="left:290px">134e15fb72</div>
<div class="pen" style="left:421px;top:12px"><svg width="10" height="10" viewBox="0 0 10 10"><path d="M0.3 9.7 L0.9 7.3 L7.6 0.6 L9.4 2.4 L2.7 9.1 Z" fill="#d3d3d3"/><path d="M0.3 9.7 L0.9 7.3 L2.7 9.1 Z" fill="#e9e9e9"/></svg></div>
<div class="tx" style="left:552px">04/2/2019 04:25:42</div>
<div class="a" style="left:674px;top:0;width:132px;height:7px;background:#fcfcfd"></div><div class="a" style="left:674px;top:27px;width:132px;height:8px;background:#fcfcfd"></div>
<div class="a" style="left:1202px;top:0;width:157px;height:7px;background:#fcfcfd"></div><div class="a" style="left:1202px;top:27px;width:157px;height:8px;background:#fcfcfd"></div>
<svg class="blur" style="left:681px;top:7px" width="100" height="20"><rect x="0" y="0" width="10" height="10" fill="#000" fill-opacity="0.035"/><rect x="10" y="0" width="10" height="10" fill="#000" fill-opacity="0.035"/><rect x="20" y="0" width="10" height="10" fill="#000" fill-opacity="0.053"/><rect x="30" y="0" width="10" height="10" fill="#000" fill-opacity="0.079"/><rect x="40" y="0" width="10" height="10" fill="#000" fill-opacity="0.085"/><rect x="50" y="0" width="10" height="10" fill="#000" fill-opacity="0.080"/><rect x="60" y="0" width="10" height="10" fill="#000" fill-opacity="0.067"/><rect x="70" y="0" width="10" height="10" fill="#000" fill-opacity="0.032"/><rect x="80" y="0" width="10" height="10" fill="#000" fill-opacity="0.052"/><rect x="90" y="0" width="10" height="10" fill="#000" fill-opacity="0.035"/><rect x="0" y="10" width="10" height="10" fill="#000" fill-opacity="0.088"/><rect x="10" y="10" width="10" height="10" fill="#000" fill-opacity="0.093"/><rect x="20" y="10" width="10" height="10" fill="#000" fill-opacity="0.052"/><rect x="30" y="10" width="10" height="10" fill="#000" fill-opacity="0.058"/><rect x="40" y="10" width="10" height="10" fill="#000" fill-opacity="0.116"/><rect x="50" y="10" width="10" height="10" fill="#000" fill-opacity="0.033"/><rect x="60" y="10" width="10" height="10" fill="#000" fill-opacity="0.118"/><rect x="70" y="10" width="10" height="10" fill="#000" fill-opacity="0.128"/><rect x="80" y="10" width="10" height="10" fill="#000" fill-opacity="0.134"/><rect x="90" y="10" width="10" height="10" fill="#000" fill-opacity="0.072"/></svg>
<div class="badge dk" style="left:814px;width:81px">Trial Signup</div>
<div class="pen" style="left:945px;top:12px"><svg width="10" height="10" viewBox="0 0 10 10"><path d="M0.3 9.7 L0.9 7.3 L7.6 0.6 L9.4 2.4 L2.7 9.1 Z" fill="#d3d3d3"/><path d="M0.3 9.7 L0.9 7.3 L2.7 9.1 Z" fill="#e9e9e9"/></svg></div>
<div class="badge bl" style="left:964px;width:63px">Pending</div>
<div class="badge dk" style="left:1076px;width:59px">Unpaid</div>
<svg class="blur" style="left:1202px;top:7px" width="130" height="20"><rect x="0" y="0" width="10" height="10" fill="#000" fill-opacity="0.064"/><rect x="10" y="0" width="10" height="10" fill="#000" fill-opacity="0.067"/><rect x="20" y="0" width="10" height="10" fill="#000" fill-opacity="0.071"/><rect x="30" y="0" width="10" height="10" fill="#000" fill-opacity="0.098"/><rect x="40" y="0" width="10" height="10" fill="#000" fill-opacity="0.075"/><rect x="50" y="0" width="10" height="10" fill="#000" fill-opacity="0.044"/><rect x="60" y="0" width="10" height="10" fill="#000" fill-opacity="0.089"/><rect x="70" y="0" width="10" height="10" fill="#000" fill-opacity="0.059"/><rect x="80" y="0" width="10" height="10" fill="#000" fill-opacity="0.068"/><rect x="90" y="0" width="10" height="10" fill="#000" fill-opacity="0.078"/><rect x="100" y="0" width="10" height="10" fill="#000" fill-opacity="0.020"/><rect x="110" y="0" width="10" height="10" fill="#000" fill-opacity="0.082"/><rect x="120" y="0" width="10" height="10" fill="#000" fill-opacity="0.073"/><rect x="0" y="10" width="10" height="10" fill="#000" fill-opacity="0.084"/><rect x="10" y="10" width="10" height="10" fill="#000" fill-opacity="0.088"/><rect x="20" y="10" width="10" height="10" fill="#000" fill-opacity="0.081"/><rect x="30" y="10" width="10" height="10" fill="#000" fill-opacity="0.051"/><rect x="40" y="10" width="10" height="10" fill="#000" fill-opacity="0.088"/><rect x="50" y="10" width="10" height="10" fill="#000" fill-opacity="0.034"/><rect x="60" y="10" width="10" height="10" fill="#000" fill-opacity="0.085"/><rect x="70" y="10" width="10" height="10" fill="#000" fill-opacity="0.101"/><rect x="80" y="10" width="10" height="10" fill="#000" fill-opacity="0.079"/><rect x="90" y="10" width="10" height="10" fill="#000" fill-opacity="0.092"/><rect x="100" y="10" width="10" height="10" fill="#000" fill-opacity="0.135"/><rect x="110" y="10" width="10" height="10" fill="#000" fill-opacity="0.128"/><rect x="120" y="10" width="10" height="10" fill="#000" fill-opacity="0.045"/></svg>
<div class="act" style="left:1469px"><svg class="a" style="left:14.5px;top:7.5px" width="11" height="11" viewBox="0 0 11 11"><path d="M0.3 10.7 L0.8 7.8 L8 0.6 Q8.6 0 9.2 0.6 L10.4 1.8 Q11 2.4 10.4 3 L3.2 10.2 Z" fill="#333"/><path d="M0.3 10.7 L0.8 7.8 L3.2 10.2 Z" fill="#fff"/><path d="M0.3 10.7 L0.5 9.5 L1.5 10.5 Z" fill="#333"/></svg><svg class="a" style="left:54px;top:7px" width="11" height="12" viewBox="0 0 11 12"><path d="M0.5 1.8 H10.5 V3.2 H0.5 Z M3.8 0.4 H7.2 V1.8 H3.8 Z M1.5 3.8 H9.5 L9 11.5 H2 Z" fill="#222"/><path d="M3.9 5 V10.3 M5.5 5 V10.3 M7.1 5 V10.3" stroke="#fff" stroke-width=".7"/></svg></div>
</div>
</div>
</div></body></html>
